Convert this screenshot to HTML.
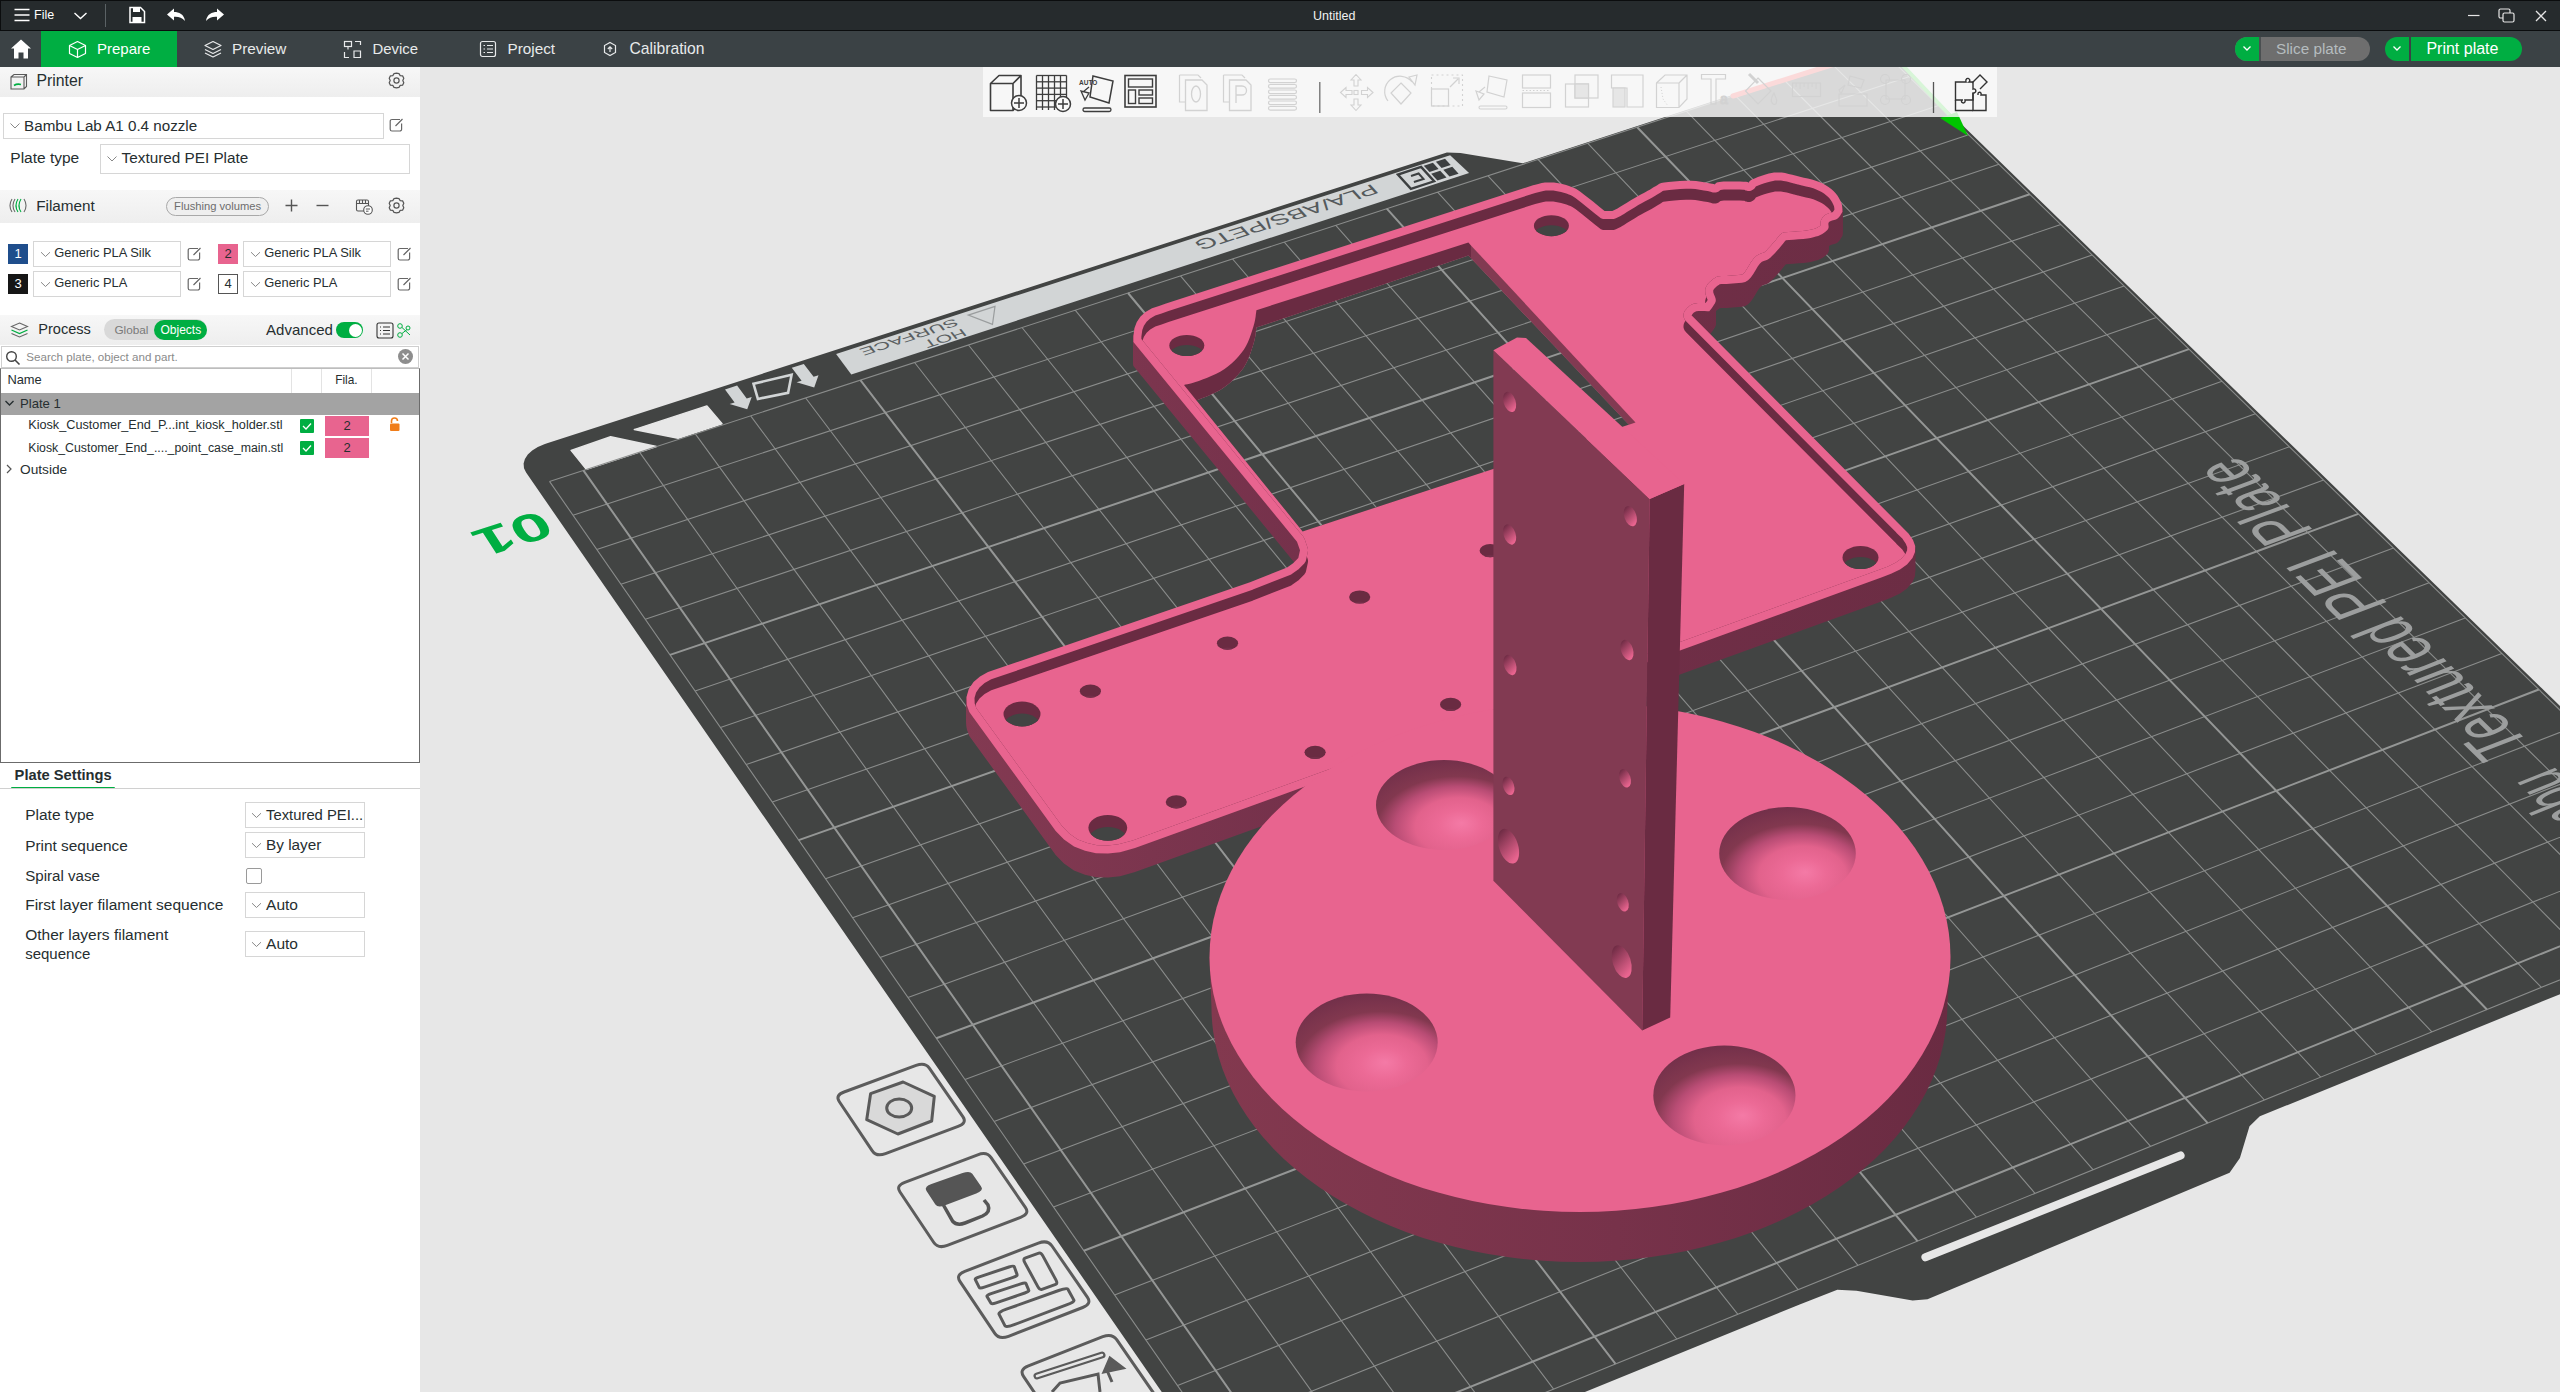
<!DOCTYPE html>
<html><head><meta charset="utf-8"><style>
*{box-sizing:border-box}
body{margin:0;width:2560px;height:1392px;position:relative;overflow:hidden;background:#e7e7e7;font-family:"Liberation Sans", sans-serif}
.a{position:absolute}
.t{position:absolute;white-space:nowrap;line-height:1}
</style></head><body>
<svg class="a" style="left:0;top:0" width="2560" height="1392" viewBox="0 0 2560 1392">
<defs><g id="grid"><path d="M549.5,481.4L1262.3,1507.6M639.5,452.1L1364.9,1465.8M695.3,433.9L1428.3,1440.1M750.7,415.9L1491.2,1414.5M805.7,398.0L1553.6,1389.1M914.6,362.5L1676.8,1339.0M968.5,345.0L1737.7,1314.2M1022.0,327.5L1798.1,1289.6M1075.2,310.2L1858.0,1265.3M1180.5,275.9L1976.4,1217.1M1232.6,259.0L2035.0,1193.3M1284.3,242.1L2093.0,1169.7M1335.8,225.4L2150.6,1146.3M1437.6,192.2L2264.4,1100.0M1488.0,175.8L2320.7,1077.1M1538.1,159.5L2376.5,1054.4M1587.8,143.3L2431.9,1031.9M1686.3,111.2L2541.4,987.4M1735.1,95.3L2595.5,965.3M1783.6,79.5L2649.3,943.5M1831.8,63.8L2702.6,921.8M1879.6,48.2L2755.5,900.3M1879.6,48.2L549.5,481.4M1908.9,76.7L573.0,515.2M1938.6,105.6L596.8,549.5M1968.6,134.8L620.9,584.2M1998.9,164.3L645.3,619.3M2060.8,224.4L695.1,691.0M2092.2,255.1L720.5,727.5M2124.1,286.0L746.2,764.6M2156.3,317.4L772.3,802.1M2222.0,381.3L825.5,878.7M2255.4,413.8L852.6,917.8M2289.3,446.8L880.1,957.4M2323.6,480.1L908.0,997.5M2393.5,548.1L965.0,1079.5M2429.1,582.8L994.1,1121.4M2465.2,617.9L1023.6,1163.9M2501.8,653.4L1053.5,1207.0M2576.3,726.0L1114.6,1295.0M2614.3,763.0L1145.9,1340.0M2652.9,800.4L1177.6,1385.6M2691.9,838.4L1209.8,1432.0M2755.5,900.3L1262.3,1507.6" stroke="#8a8c8b" stroke-width="1.1" fill="none"/><path d="M583.4,470.4L1300.9,1491.9M860.4,380.2L1615.5,1363.9M1128.0,293.0L1917.5,1241.1M1386.8,208.7L2207.7,1123.1M1637.2,127.2L2486.9,1009.5M2029.7,194.2L670.0,654.9M2188.9,349.1L798.7,840.1M2358.3,513.9L936.3,1038.2M2538.8,689.5L1083.8,1250.7M2731.5,876.9L1242.4,1479.0" stroke="#949695" stroke-width="2" fill="none"/></g>
<path id="OUT" d="M1133.4,342.0 L1133.4,336.0 L1134.5,328.0 L1136.8,322.0 L1140.5,316.5 L1145.5,312.0 L1152.0,308.3 L1159.0,305.9 L1166.0,303.5 L1533.0,185.3 L1535.2,184.7 L1538.2,183.9 L1541.7,183.1 L1545.0,182.6 L1548.0,182.4 L1551.0,182.4 L1554.0,182.6 L1557.0,183.0 L1560.0,183.5 L1563.1,184.2 L1566.1,185.0 L1569.0,186.0 L1571.5,186.9 L1573.7,187.7 L1576.3,189.1 L1580.0,191.5 L1585.8,195.9 L1593.0,201.6 L1599.9,207.2 L1604.6,211.1 L1612.3,211.1 L1617.5,208.5 L1619.8,207.1 L1623.1,205.0 L1626.9,202.7 L1630.8,200.3 L1634.3,198.2 L1637.7,196.2 L1641.3,194.3 L1644.8,192.4 L1647.7,190.8 L1649.8,189.7 L1650.6,189.2 L1651.7,188.5 L1653.1,187.6 L1654.5,186.8 L1656.0,186.0 L1657.2,185.3 L1658.2,184.5 L1659.4,183.8 L1661.2,183.1 L1664.1,182.5 L1668.4,182.0 L1673.9,181.5 L1679.9,181.1 L1685.9,180.8 L1691.2,180.8 L1696.1,181.1 L1700.9,181.8 L1705.3,182.5 L1709.1,183.3 L1712.0,183.8 L1713.7,184.1 L1714.4,184.3 L1714.6,184.4 L1714.5,184.5 L1714.5,184.6 L1714.9,184.2 L1715.3,183.7 L1715.9,183.2 L1716.8,182.6 L1718.0,182.2 L1719.6,181.9 L1721.4,181.7 L1723.6,181.6 L1726.0,181.5 L1728.7,181.5 L1732.0,181.5 L1735.9,181.5 L1739.8,181.6 L1743.4,181.7 L1746.0,181.8 L1747.5,182.0 L1748.2,182.3 L1748.5,182.6 L1748.5,182.8 L1748.6,183.0 L1748.8,182.6 L1749.1,182.0 L1749.5,181.2 L1750.4,180.4 L1752.0,179.5 L1754.6,178.4 L1757.9,177.1 L1761.7,175.7 L1765.5,174.5 L1768.8,173.6 L1771.6,173.0 L1774.0,172.6 L1776.4,172.4 L1778.9,172.4 L1781.8,172.6 L1785.1,173.1 L1788.6,173.9 L1792.3,174.8 L1796.1,175.8 L1799.9,176.8 L1803.8,177.7 L1807.8,178.6 L1811.9,179.6 L1815.7,180.7 L1819.3,182.0 L1822.6,183.5 L1825.7,185.2 L1828.5,187.0 L1831.2,189.0 L1833.5,191.0 L1835.6,193.2 L1837.4,195.6 L1838.9,198.1 L1840.2,200.5 L1841.2,202.7 L1841.9,204.8 L1842.2,206.9 L1842.4,208.9 L1842.4,210.5 L1842.5,211.7 L1841.9,212.7 L1841.1,214.1 L1840.1,215.8 L1838.9,217.3 L1837.6,218.6 L1836.0,219.5 L1834.1,220.1 L1832.1,220.6 L1830.3,221.2 L1829.0,222.1 L1828.4,223.3 L1828.4,224.7 L1828.6,226.1 L1828.6,227.6 L1828.1,229.0 L1827.1,230.3 L1825.7,231.6 L1824.1,232.8 L1822.3,234.0 L1820.3,235.0 L1818.2,235.9 L1815.9,236.6 L1813.4,237.3 L1810.6,237.9 L1807.4,238.4 L1803.3,238.9 L1798.4,239.3 L1793.4,239.7 L1789.0,240.0 L1785.9,240.2 L1784.7,241.6 L1783.0,243.7 L1781.1,246.0 L1779.1,248.4 L1777.2,250.5 L1775.5,252.4 L1773.8,254.3 L1772.0,256.1 L1770.3,257.7 L1768.6,259.1 L1766.9,260.0 L1765.3,260.5 L1763.7,261.0 L1761.9,261.8 L1760.0,263.4 L1757.9,266.2 L1755.7,269.9 L1753.3,273.9 L1750.8,277.6 L1748.1,280.3 L1745.2,281.9 L1742.0,282.7 L1738.8,283.1 L1735.6,283.2 L1732.6,283.5 L1729.6,283.8 L1726.6,284.0 L1723.8,284.1 L1721.4,284.1 L1719.7,284.2 L1718.7,285.0 L1717.1,286.1 L1715.5,287.4 L1714.0,289.0 L1713.2,290.6 L1713.3,292.4 L1714.0,294.5 L1715.0,296.7 L1715.7,298.9 L1715.8,301.0 L1715.0,303.2 L1713.5,305.6 L1711.9,307.9 L1710.3,309.9 L1709.3,311.3 L1707.4,311.2 L1704.7,311.1 L1701.6,311.0 L1698.7,311.0 L1696.4,311.3 L1694.8,311.9 L1693.6,312.8 L1692.7,313.8 L1692.0,314.7 L1691.5,315.3 L1902.0,527.0 L1908.5,533.5 L1913.0,540.0 L1915.2,546.0 L1915.0,552.0 L1912.5,558.0 L1907.0,564.5 L1900.0,569.5 L1891.0,573.8 L1882.0,577.2 L1135.0,848.1 L1120.0,852.2 L1108.0,853.6 L1096.0,853.2 L1085.0,850.8 L1074.0,846.5 L1064.0,839.5 L1055.7,831.0 L969.3,712.0 L966.8,705.0 L966.5,697.0 L968.8,689.0 L973.5,682.0 L980.0,676.5 L988.0,672.0 L999.0,668.2 L1250.0,582.2 L1287.1,567.6 L1293.1,563.3 L1298.3,558.1 L1300.0,550.3 L1297.0,541.7Z"/>
<linearGradient id="bwall" gradientUnits="userSpaceOnUse" x1="960" y1="0" x2="1920" y2="0"><stop offset="0" stop-color="#833a52"/><stop offset="0.4" stop-color="#73304a"/><stop offset="1" stop-color="#6c2d44"/></linearGradient>
<clipPath id="c1"><path d="M1141.4,339.1 L1303.2,536.6 L1303.6,537.2 L1304.0,537.8 L1304.3,538.4 L1304.6,539.1 L1307.6,547.7 L1307.8,548.4 L1307.9,549.1 L1308.0,549.8 L1308.0,550.5 L1307.9,551.3 L1307.8,552.0 L1306.1,559.8 L1305.9,560.5 L1305.7,561.3 L1305.3,561.9 L1304.9,562.6 L1304.5,563.2 L1304.0,563.8 L1298.8,569.0 L1298.3,569.4 L1297.8,569.8 L1291.8,574.1 L1291.2,574.5 L1290.6,574.8 L1290.0,575.0 L1252.9,589.6 L1252.6,589.8 L1001.6,675.8 L991.3,679.3 L984.6,683.1 L979.5,687.4 L976.1,692.4 L974.5,698.0 L974.7,703.5 L976.4,708.2 L1061.8,825.8 L1069.2,833.4 L1077.8,839.4 L1087.3,843.1 L1097.0,845.2 L1107.7,845.6 L1118.5,844.3 L1132.6,840.5 L1879.2,569.7 L1887.9,566.4 L1895.9,562.6 L1901.5,558.6 L1905.6,553.8 L1907.1,550.3 L1907.2,547.3 L1905.8,543.7 L1902.3,538.6 L1896.3,532.7 L1896.3,532.6 L1685.8,320.9 L1685.3,320.3 L1684.8,319.7 L1684.4,319.0 L1684.1,318.3 L1683.8,317.5 L1683.6,316.7 L1683.5,315.9 L1683.5,315.1 L1683.6,314.3 L1683.7,313.5 L1683.9,312.8 L1684.2,312.0 L1684.6,311.3 L1685.0,310.6 L1685.5,310.0 L1685.9,309.6 L1686.4,308.9 L1686.8,308.4 L1687.7,307.4 L1688.3,306.9 L1688.8,306.4 L1690.0,305.5 L1690.6,305.1 L1691.3,304.7 L1691.9,304.4 L1693.5,303.8 L1694.2,303.6 L1694.8,303.5 L1695.5,303.4 L1697.8,303.1 L1698.6,303.0 L1701.5,303.0 L1701.9,303.0 L1704.9,303.1 L1705.1,303.1 L1705.5,303.1 L1705.5,303.1 L1706.9,301.2 L1707.6,299.9 L1707.5,299.5 L1706.7,297.7 L1706.5,297.2 L1705.8,295.1 L1705.5,294.4 L1705.4,293.6 L1705.3,292.8 L1705.2,291.0 L1705.2,290.1 L1705.3,289.3 L1705.5,288.5 L1705.7,287.8 L1706.0,287.0 L1706.9,285.4 L1707.3,284.7 L1707.7,284.1 L1708.2,283.5 L1709.6,281.9 L1710.5,281.2 L1712.1,279.9 L1712.5,279.6 L1713.9,278.6 L1714.8,277.9 L1715.5,277.4 L1716.2,277.0 L1717.0,276.7 L1717.8,276.4 L1718.6,276.3 L1719.4,276.2 L1721.2,276.1 L1721.2,276.1 L1723.6,276.1 L1726.3,276.0 L1729.0,275.8 L1731.8,275.5 L1731.9,275.5 L1734.9,275.3 L1735.1,275.3 L1738.1,275.1 L1740.6,274.8 L1742.2,274.4 L1743.3,273.8 L1744.6,272.5 L1746.5,269.6 L1748.8,265.8 L1748.8,265.8 L1751.0,262.1 L1751.5,261.4 L1753.6,258.6 L1754.2,257.9 L1754.9,257.2 L1756.8,255.6 L1757.4,255.2 L1757.9,254.9 L1758.5,254.6 L1760.3,253.7 L1760.9,253.5 L1761.5,253.3 L1763.1,252.8 L1763.8,252.6 L1764.1,252.5 L1765.0,251.7 L1766.4,250.4 L1767.9,248.8 L1769.6,247.0 L1771.2,245.2 L1773.0,243.1 L1775.0,240.9 L1776.9,238.6 L1778.5,236.5 L1778.6,236.5 L1779.7,235.1 L1780.3,234.5 L1780.9,234.0 L1781.5,233.5 L1782.2,233.1 L1783.0,232.8 L1783.7,232.5 L1784.5,232.3 L1785.3,232.2 L1788.4,232.0 L1788.4,232.0 L1792.8,231.7 L1797.7,231.3 L1802.5,230.9 L1806.3,230.5 L1809.1,230.0 L1811.6,229.5 L1813.6,229.0 L1815.4,228.4 L1817.0,227.7 L1818.3,227.0 L1819.5,226.3 L1820.5,225.5 L1820.4,224.5 L1820.4,223.2 L1820.5,222.3 L1820.6,221.4 L1820.9,220.6 L1821.2,219.8 L1821.8,218.7 L1822.2,217.9 L1822.7,217.2 L1823.2,216.6 L1823.9,216.0 L1824.5,215.5 L1825.8,214.6 L1826.4,214.2 L1827.0,213.9 L1827.7,213.7 L1829.4,213.1 L1830.0,212.9 L1831.8,212.4 L1832.8,212.1 L1832.8,212.1 L1833.4,211.3 L1834.2,210.0 L1834.4,209.7 L1834.4,209.3 L1834.3,207.9 L1834.1,206.7 L1833.7,205.6 L1833.0,204.1 L1832.0,202.1 L1830.7,200.1 L1829.4,198.3 L1827.9,196.8 L1826.1,195.2 L1824.0,193.6 L1821.6,192.1 L1819.0,190.7 L1816.2,189.4 L1813.3,188.3 L1809.8,187.3 L1806.0,186.4 L1802.0,185.5 L1801.9,185.5 L1798.1,184.6 L1797.9,184.5 L1794.1,183.6 L1794.0,183.5 L1790.3,182.5 L1786.8,181.6 L1783.6,181.0 L1780.9,180.6 L1778.6,180.4 L1776.8,180.4 L1775.0,180.5 L1773.1,180.9 L1770.7,181.4 L1767.8,182.2 L1764.3,183.3 L1760.7,184.6 L1757.6,185.8 L1755.8,186.6 L1755.6,186.9 L1755.1,187.6 L1754.7,188.2 L1754.1,188.8 L1753.5,189.3 L1752.9,189.7 L1752.2,190.1 L1751.5,190.4 L1750.8,190.7 L1750.0,190.9 L1749.3,191.0 L1748.5,191.0 L1747.7,191.0 L1747.0,190.8 L1746.2,190.6 L1745.5,190.4 L1744.8,190.0 L1744.3,189.7 L1743.1,189.7 L1739.6,189.6 L1735.8,189.5 L1732.0,189.5 L1728.8,189.5 L1726.2,189.5 L1724.0,189.6 L1722.1,189.7 L1720.6,189.9 L1720.5,189.9 L1720.5,190.0 L1720.1,190.3 L1719.5,190.8 L1718.9,191.3 L1718.2,191.7 L1717.5,192.0 L1716.7,192.3 L1716.0,192.5 L1715.2,192.6 L1714.4,192.6 L1713.6,192.5 L1712.8,192.4 L1712.1,192.2 L1711.3,191.9 L1710.9,191.7 L1710.6,191.7 L1710.5,191.7 L1707.7,191.1 L1707.6,191.1 L1703.9,190.4 L1699.6,189.7 L1695.3,189.1 L1690.9,188.8 L1686.1,188.8 L1680.3,189.0 L1674.5,189.4 L1669.3,189.9 L1665.4,190.4 L1663.4,190.8 L1662.9,191.0 L1662.7,191.1 L1662.0,191.6 L1661.4,192.1 L1660.2,192.8 L1659.8,193.0 L1658.5,193.8 L1657.2,194.5 L1656.0,195.3 L1654.9,195.9 L1654.8,196.0 L1654.0,196.5 L1653.6,196.7 L1651.5,197.9 L1651.5,197.9 L1648.6,199.4 L1645.2,201.3 L1641.6,203.2 L1638.3,205.1 L1634.9,207.2 L1631.1,209.5 L1627.3,211.8 L1624.0,213.9 L1624.0,213.9 L1621.7,215.3 L1621.1,215.7 L1615.9,218.3 L1615.2,218.6 L1614.5,218.8 L1613.8,219.0 L1613.0,219.1 L1612.3,219.1 L1604.6,219.1 L1603.8,219.1 L1603.0,218.9 L1602.3,218.8 L1601.6,218.5 L1600.9,218.2 L1600.2,217.8 L1599.6,217.3 L1594.8,213.5 L1594.8,213.4 L1588.0,207.9 L1580.9,202.2 L1575.4,198.0 L1572.3,196.0 L1570.4,195.0 L1568.8,194.4 L1566.4,193.6 L1563.7,192.7 L1561.1,191.9 L1558.5,191.4 L1555.9,190.9 L1553.3,190.6 L1550.7,190.4 L1548.2,190.4 L1545.9,190.6 L1543.3,191.0 L1540.2,191.7 L1537.2,192.5 L1537.2,192.5 L1535.2,193.0 L1168.5,311.1 L1161.6,313.5 L1155.3,315.6 L1150.2,318.5 L1146.6,321.8 L1143.9,325.7 L1142.3,330.0 L1141.4,336.5Z"/></clipPath>
<clipPath id="c2"><path d="M1302.6,531.4 L1184.0,385.0 L1185.5,384.6 L1187.4,384.2 L1189.8,383.7 L1192.5,383.0 L1195.5,382.1 L1198.8,380.9 L1202.5,379.5 L1206.7,377.9 L1211.2,376.0 L1215.8,374.0 L1220.2,371.7 L1224.2,369.2 L1227.9,366.4 L1231.5,363.4 L1235.0,360.2 L1238.2,356.8 L1241.1,353.3 L1243.8,349.7 L1246.0,345.9 L1248.0,341.9 L1249.7,337.8 L1251.1,333.7 L1252.4,329.8 L1253.5,326.2 L1254.4,323.0 L1255.1,319.8 L1255.6,316.8 L1255.9,314.1 L1256.2,311.9 L1256.4,310.2 L1468.4,242.6 L1635.5,422.5Z"/></clipPath>
<clipPath id="c3"><path d="M1302.6,547.8 L1184.0,404.0 L1185.5,403.6 L1187.4,403.2 L1189.8,402.6 L1192.5,401.8 L1195.5,400.8 L1198.8,399.6 L1202.5,398.1 L1206.7,396.4 L1211.2,394.4 L1215.8,392.3 L1220.2,389.9 L1224.2,387.3 L1227.9,384.5 L1231.5,381.4 L1235.0,378.1 L1238.2,374.6 L1241.1,371.0 L1243.8,367.4 L1246.0,363.6 L1248.0,359.5 L1249.7,355.3 L1251.1,351.2 L1252.4,347.3 L1253.5,343.7 L1254.4,340.4 L1255.1,337.2 L1255.6,334.2 L1255.9,331.5 L1256.2,329.3 L1256.4,327.6 L1468.4,255.4 L1635.5,431.7Z"/></clipPath>
<clipPath id="c4"><path d="M1169.3,345.5a17.5,10.5 0 1,0 35.0,0a17.5,10.5 0 1,0 -35.0,0Z"/></clipPath>
<clipPath id="c5"><path d="M1533.9,225.7a17.5,10.5 0 1,0 35.0,0a17.5,10.5 0 1,0 -35.0,0Z"/></clipPath>
<clipPath id="c6"><path d="M1842.5,557.5a18,11.5 0 1,0 36,0a18,11.5 0 1,0 -36,0Z"/></clipPath>
<clipPath id="c7"><path d="M1088.3999999999999,827.8a19.4,12.9 0 1,0 38.8,0a19.4,12.9 0 1,0 -38.8,0Z"/></clipPath>
<clipPath id="c8"><path d="M1003.5,714a18.5,12.5 0 1,0 37.0,0a18.5,12.5 0 1,0 -37.0,0Z"/></clipPath>
<clipPath id="c9"><path d="M1079.8000000000002,691.2a10.6,6.6 0 1,0 21.2,0a10.6,6.6 0 1,0 -21.2,0Z"/></clipPath>
<clipPath id="c10"><path d="M1216.9,643.2a10.6,6.6 0 1,0 21.2,0a10.6,6.6 0 1,0 -21.2,0Z"/></clipPath>
<clipPath id="c11"><path d="M1349.1000000000001,597a10.6,6.6 0 1,0 21.2,0a10.6,6.6 0 1,0 -21.2,0Z"/></clipPath>
<clipPath id="c12"><path d="M1479.6000000000001,550.7a10.6,6.6 0 1,0 21.2,0a10.6,6.6 0 1,0 -21.2,0Z"/></clipPath>
<clipPath id="c13"><path d="M1440.0,704.4a10.6,6.6 0 1,0 21.2,0a10.6,6.6 0 1,0 -21.2,0Z"/></clipPath>
<clipPath id="c14"><path d="M1304.5,752.3a10.6,6.6 0 1,0 21.2,0a10.6,6.6 0 1,0 -21.2,0Z"/></clipPath>
<clipPath id="c15"><path d="M1165.7,801.9a10.6,6.6 0 1,0 21.2,0a10.6,6.6 0 1,0 -21.2,0Z"/></clipPath>
<linearGradient id="dwall" x1="0" x2="1" y1="0" y2="0"><stop offset="0" stop-color="#83394f"/><stop offset="0.55" stop-color="#77324a"/><stop offset="1" stop-color="#6a2b42"/></linearGradient>
<radialGradient id="dimp" cx="0.58" cy="0.8" r="0.8" fx="0.63" fy="0.7"><stop offset="0" stop-color="#f47aa6"/><stop offset="0.2" stop-color="#ec6a96"/><stop offset="0.4" stop-color="#e2628c"/><stop offset="0.58" stop-color="#b84c74"/><stop offset="0.74" stop-color="#82384f"/><stop offset="1" stop-color="#73304a"/></radialGradient>
<linearGradient id="vh" x1="0" y1="0" x2="0.3" y2="1"><stop offset="0" stop-color="#5e243a"/><stop offset="1" stop-color="#e8648f"/></linearGradient></defs>
<rect x="0" y="0" width="2560" height="1392" fill="#e7e7e7"/>
<path d="M1881.6,46.5 L1522.7,163.3 L1460.5,153.0 L1446.9,152.4 L547.1,443.3 L544.3,444.2 L537.8,446.9 L532.2,450.4 L527.8,454.4 L524.9,458.9 L523.6,463.6 L524.0,468.2 L526.1,472.6 L526.1,472.6 L1254.8,1526.6 L1800.3,1304.2 L1837.3,1289.7 L1856.5,1290.7 L1912.6,1300.6 L1927.5,1299.3 L2229.6,1172.8 L2239.9,1158.0 L2249.5,1126.3 L2259.8,1116.3 L2769.1,909.2Z" fill="#424443"/>
<path d="M571.1,450.4 L586.4,469.4 L656.4,446.6 L610.6,436.8Z" fill="#e7e7e7" stroke="#e7e7e7" stroke-width="1.5" stroke-linejoin="round"/>
<path d="M634.3,429.6 L706.9,405.9 L722.0,423.8 L678.2,438.2Z" fill="#e7e7e7" stroke="#e7e7e7" stroke-width="1.5" stroke-linejoin="round"/>
<line x1="1925.4" y1="1257.3" x2="2180.6" y2="1155.5" stroke="#e7e7e7" stroke-width="8" stroke-linecap="round"/>
<path d="M836.1,353.9 L851.3,374.6 L1469.1,173.0 L1450.1,155.2Z" fill="#d2d5d6"/>
<use href="#grid"/>
<g fill="url(#bwall)"><use href="#OUT" y="1"/><use href="#OUT" y="2"/><use href="#OUT" y="3"/><use href="#OUT" y="4"/><use href="#OUT" y="5"/><use href="#OUT" y="6"/><use href="#OUT" y="7"/><use href="#OUT" y="8"/><use href="#OUT" y="9"/><use href="#OUT" y="10"/><use href="#OUT" y="11"/><use href="#OUT" y="12"/><use href="#OUT" y="13"/><use href="#OUT" y="14"/><use href="#OUT" y="15"/><use href="#OUT" y="16"/><use href="#OUT" y="17"/><use href="#OUT" y="18"/><use href="#OUT" y="19"/><use href="#OUT" y="20"/><use href="#OUT" y="21"/><use href="#OUT" y="22"/><use href="#OUT" y="23"/><use href="#OUT" y="24"/></g>
<use href="#OUT" fill="#e8648f"/>
<path d="M1141.4,339.1 L1303.2,536.6 L1303.6,537.2 L1304.0,537.8 L1304.3,538.4 L1304.6,539.1 L1307.6,547.7 L1307.8,548.4 L1307.9,549.1 L1308.0,549.8 L1308.0,550.5 L1307.9,551.3 L1307.8,552.0 L1306.1,559.8 L1305.9,560.5 L1305.7,561.3 L1305.3,561.9 L1304.9,562.6 L1304.5,563.2 L1304.0,563.8 L1298.8,569.0 L1298.3,569.4 L1297.8,569.8 L1291.8,574.1 L1291.2,574.5 L1290.6,574.8 L1290.0,575.0 L1252.9,589.6 L1252.6,589.8 L1001.6,675.8 L991.3,679.3 L984.6,683.1 L979.5,687.4 L976.1,692.4 L974.5,698.0 L974.7,703.5 L976.4,708.2 L1061.8,825.8 L1069.2,833.4 L1077.8,839.4 L1087.3,843.1 L1097.0,845.2 L1107.7,845.6 L1118.5,844.3 L1132.6,840.5 L1879.2,569.7 L1887.9,566.4 L1895.9,562.6 L1901.5,558.6 L1905.6,553.8 L1907.1,550.3 L1907.2,547.3 L1905.8,543.7 L1902.3,538.6 L1896.3,532.7 L1896.3,532.6 L1685.8,320.9 L1685.3,320.3 L1684.8,319.7 L1684.4,319.0 L1684.1,318.3 L1683.8,317.5 L1683.6,316.7 L1683.5,315.9 L1683.5,315.1 L1683.6,314.3 L1683.7,313.5 L1683.9,312.8 L1684.2,312.0 L1684.6,311.3 L1685.0,310.6 L1685.5,310.0 L1685.9,309.6 L1686.4,308.9 L1686.8,308.4 L1687.7,307.4 L1688.3,306.9 L1688.8,306.4 L1690.0,305.5 L1690.6,305.1 L1691.3,304.7 L1691.9,304.4 L1693.5,303.8 L1694.2,303.6 L1694.8,303.5 L1695.5,303.4 L1697.8,303.1 L1698.6,303.0 L1701.5,303.0 L1701.9,303.0 L1704.9,303.1 L1705.1,303.1 L1705.5,303.1 L1705.5,303.1 L1706.9,301.2 L1707.6,299.9 L1707.5,299.5 L1706.7,297.7 L1706.5,297.2 L1705.8,295.1 L1705.5,294.4 L1705.4,293.6 L1705.3,292.8 L1705.2,291.0 L1705.2,290.1 L1705.3,289.3 L1705.5,288.5 L1705.7,287.8 L1706.0,287.0 L1706.9,285.4 L1707.3,284.7 L1707.7,284.1 L1708.2,283.5 L1709.6,281.9 L1710.5,281.2 L1712.1,279.9 L1712.5,279.6 L1713.9,278.6 L1714.8,277.9 L1715.5,277.4 L1716.2,277.0 L1717.0,276.7 L1717.8,276.4 L1718.6,276.3 L1719.4,276.2 L1721.2,276.1 L1721.2,276.1 L1723.6,276.1 L1726.3,276.0 L1729.0,275.8 L1731.8,275.5 L1731.9,275.5 L1734.9,275.3 L1735.1,275.3 L1738.1,275.1 L1740.6,274.8 L1742.2,274.4 L1743.3,273.8 L1744.6,272.5 L1746.5,269.6 L1748.8,265.8 L1748.8,265.8 L1751.0,262.1 L1751.5,261.4 L1753.6,258.6 L1754.2,257.9 L1754.9,257.2 L1756.8,255.6 L1757.4,255.2 L1757.9,254.9 L1758.5,254.6 L1760.3,253.7 L1760.9,253.5 L1761.5,253.3 L1763.1,252.8 L1763.8,252.6 L1764.1,252.5 L1765.0,251.7 L1766.4,250.4 L1767.9,248.8 L1769.6,247.0 L1771.2,245.2 L1773.0,243.1 L1775.0,240.9 L1776.9,238.6 L1778.5,236.5 L1778.6,236.5 L1779.7,235.1 L1780.3,234.5 L1780.9,234.0 L1781.5,233.5 L1782.2,233.1 L1783.0,232.8 L1783.7,232.5 L1784.5,232.3 L1785.3,232.2 L1788.4,232.0 L1788.4,232.0 L1792.8,231.7 L1797.7,231.3 L1802.5,230.9 L1806.3,230.5 L1809.1,230.0 L1811.6,229.5 L1813.6,229.0 L1815.4,228.4 L1817.0,227.7 L1818.3,227.0 L1819.5,226.3 L1820.5,225.5 L1820.4,224.5 L1820.4,223.2 L1820.5,222.3 L1820.6,221.4 L1820.9,220.6 L1821.2,219.8 L1821.8,218.7 L1822.2,217.9 L1822.7,217.2 L1823.2,216.6 L1823.9,216.0 L1824.5,215.5 L1825.8,214.6 L1826.4,214.2 L1827.0,213.9 L1827.7,213.7 L1829.4,213.1 L1830.0,212.9 L1831.8,212.4 L1832.8,212.1 L1832.8,212.1 L1833.4,211.3 L1834.2,210.0 L1834.4,209.7 L1834.4,209.3 L1834.3,207.9 L1834.1,206.7 L1833.7,205.6 L1833.0,204.1 L1832.0,202.1 L1830.7,200.1 L1829.4,198.3 L1827.9,196.8 L1826.1,195.2 L1824.0,193.6 L1821.6,192.1 L1819.0,190.7 L1816.2,189.4 L1813.3,188.3 L1809.8,187.3 L1806.0,186.4 L1802.0,185.5 L1801.9,185.5 L1798.1,184.6 L1797.9,184.5 L1794.1,183.6 L1794.0,183.5 L1790.3,182.5 L1786.8,181.6 L1783.6,181.0 L1780.9,180.6 L1778.6,180.4 L1776.8,180.4 L1775.0,180.5 L1773.1,180.9 L1770.7,181.4 L1767.8,182.2 L1764.3,183.3 L1760.7,184.6 L1757.6,185.8 L1755.8,186.6 L1755.6,186.9 L1755.1,187.6 L1754.7,188.2 L1754.1,188.8 L1753.5,189.3 L1752.9,189.7 L1752.2,190.1 L1751.5,190.4 L1750.8,190.7 L1750.0,190.9 L1749.3,191.0 L1748.5,191.0 L1747.7,191.0 L1747.0,190.8 L1746.2,190.6 L1745.5,190.4 L1744.8,190.0 L1744.3,189.7 L1743.1,189.7 L1739.6,189.6 L1735.8,189.5 L1732.0,189.5 L1728.8,189.5 L1726.2,189.5 L1724.0,189.6 L1722.1,189.7 L1720.6,189.9 L1720.5,189.9 L1720.5,190.0 L1720.1,190.3 L1719.5,190.8 L1718.9,191.3 L1718.2,191.7 L1717.5,192.0 L1716.7,192.3 L1716.0,192.5 L1715.2,192.6 L1714.4,192.6 L1713.6,192.5 L1712.8,192.4 L1712.1,192.2 L1711.3,191.9 L1710.9,191.7 L1710.6,191.7 L1710.5,191.7 L1707.7,191.1 L1707.6,191.1 L1703.9,190.4 L1699.6,189.7 L1695.3,189.1 L1690.9,188.8 L1686.1,188.8 L1680.3,189.0 L1674.5,189.4 L1669.3,189.9 L1665.4,190.4 L1663.4,190.8 L1662.9,191.0 L1662.7,191.1 L1662.0,191.6 L1661.4,192.1 L1660.2,192.8 L1659.8,193.0 L1658.5,193.8 L1657.2,194.5 L1656.0,195.3 L1654.9,195.9 L1654.8,196.0 L1654.0,196.5 L1653.6,196.7 L1651.5,197.9 L1651.5,197.9 L1648.6,199.4 L1645.2,201.3 L1641.6,203.2 L1638.3,205.1 L1634.9,207.2 L1631.1,209.5 L1627.3,211.8 L1624.0,213.9 L1624.0,213.9 L1621.7,215.3 L1621.1,215.7 L1615.9,218.3 L1615.2,218.6 L1614.5,218.8 L1613.8,219.0 L1613.0,219.1 L1612.3,219.1 L1604.6,219.1 L1603.8,219.1 L1603.0,218.9 L1602.3,218.8 L1601.6,218.5 L1600.9,218.2 L1600.2,217.8 L1599.6,217.3 L1594.8,213.5 L1594.8,213.4 L1588.0,207.9 L1580.9,202.2 L1575.4,198.0 L1572.3,196.0 L1570.4,195.0 L1568.8,194.4 L1566.4,193.6 L1563.7,192.7 L1561.1,191.9 L1558.5,191.4 L1555.9,190.9 L1553.3,190.6 L1550.7,190.4 L1548.2,190.4 L1545.9,190.6 L1543.3,191.0 L1540.2,191.7 L1537.2,192.5 L1537.2,192.5 L1535.2,193.0 L1168.5,311.1 L1161.6,313.5 L1155.3,315.6 L1150.2,318.5 L1146.6,321.8 L1143.9,325.7 L1142.3,330.0 L1141.4,336.5Z" fill="#6a2b42"/>
<g clip-path="url(#c1)"><path d="M1141.4,339.1 L1303.2,536.6 L1303.6,537.2 L1304.0,537.8 L1304.3,538.4 L1304.6,539.1 L1307.6,547.7 L1307.8,548.4 L1307.9,549.1 L1308.0,549.8 L1308.0,550.5 L1307.9,551.3 L1307.8,552.0 L1306.1,559.8 L1305.9,560.5 L1305.7,561.3 L1305.3,561.9 L1304.9,562.6 L1304.5,563.2 L1304.0,563.8 L1298.8,569.0 L1298.3,569.4 L1297.8,569.8 L1291.8,574.1 L1291.2,574.5 L1290.6,574.8 L1290.0,575.0 L1252.9,589.6 L1252.6,589.8 L1001.6,675.8 L991.3,679.3 L984.6,683.1 L979.5,687.4 L976.1,692.4 L974.5,698.0 L974.7,703.5 L976.4,708.2 L1061.8,825.8 L1069.2,833.4 L1077.8,839.4 L1087.3,843.1 L1097.0,845.2 L1107.7,845.6 L1118.5,844.3 L1132.6,840.5 L1879.2,569.7 L1887.9,566.4 L1895.9,562.6 L1901.5,558.6 L1905.6,553.8 L1907.1,550.3 L1907.2,547.3 L1905.8,543.7 L1902.3,538.6 L1896.3,532.7 L1896.3,532.6 L1685.8,320.9 L1685.3,320.3 L1684.8,319.7 L1684.4,319.0 L1684.1,318.3 L1683.8,317.5 L1683.6,316.7 L1683.5,315.9 L1683.5,315.1 L1683.6,314.3 L1683.7,313.5 L1683.9,312.8 L1684.2,312.0 L1684.6,311.3 L1685.0,310.6 L1685.5,310.0 L1685.9,309.6 L1686.4,308.9 L1686.8,308.4 L1687.7,307.4 L1688.3,306.9 L1688.8,306.4 L1690.0,305.5 L1690.6,305.1 L1691.3,304.7 L1691.9,304.4 L1693.5,303.8 L1694.2,303.6 L1694.8,303.5 L1695.5,303.4 L1697.8,303.1 L1698.6,303.0 L1701.5,303.0 L1701.9,303.0 L1704.9,303.1 L1705.1,303.1 L1705.5,303.1 L1705.5,303.1 L1706.9,301.2 L1707.6,299.9 L1707.5,299.5 L1706.7,297.7 L1706.5,297.2 L1705.8,295.1 L1705.5,294.4 L1705.4,293.6 L1705.3,292.8 L1705.2,291.0 L1705.2,290.1 L1705.3,289.3 L1705.5,288.5 L1705.7,287.8 L1706.0,287.0 L1706.9,285.4 L1707.3,284.7 L1707.7,284.1 L1708.2,283.5 L1709.6,281.9 L1710.5,281.2 L1712.1,279.9 L1712.5,279.6 L1713.9,278.6 L1714.8,277.9 L1715.5,277.4 L1716.2,277.0 L1717.0,276.7 L1717.8,276.4 L1718.6,276.3 L1719.4,276.2 L1721.2,276.1 L1721.2,276.1 L1723.6,276.1 L1726.3,276.0 L1729.0,275.8 L1731.8,275.5 L1731.9,275.5 L1734.9,275.3 L1735.1,275.3 L1738.1,275.1 L1740.6,274.8 L1742.2,274.4 L1743.3,273.8 L1744.6,272.5 L1746.5,269.6 L1748.8,265.8 L1748.8,265.8 L1751.0,262.1 L1751.5,261.4 L1753.6,258.6 L1754.2,257.9 L1754.9,257.2 L1756.8,255.6 L1757.4,255.2 L1757.9,254.9 L1758.5,254.6 L1760.3,253.7 L1760.9,253.5 L1761.5,253.3 L1763.1,252.8 L1763.8,252.6 L1764.1,252.5 L1765.0,251.7 L1766.4,250.4 L1767.9,248.8 L1769.6,247.0 L1771.2,245.2 L1773.0,243.1 L1775.0,240.9 L1776.9,238.6 L1778.5,236.5 L1778.6,236.5 L1779.7,235.1 L1780.3,234.5 L1780.9,234.0 L1781.5,233.5 L1782.2,233.1 L1783.0,232.8 L1783.7,232.5 L1784.5,232.3 L1785.3,232.2 L1788.4,232.0 L1788.4,232.0 L1792.8,231.7 L1797.7,231.3 L1802.5,230.9 L1806.3,230.5 L1809.1,230.0 L1811.6,229.5 L1813.6,229.0 L1815.4,228.4 L1817.0,227.7 L1818.3,227.0 L1819.5,226.3 L1820.5,225.5 L1820.4,224.5 L1820.4,223.2 L1820.5,222.3 L1820.6,221.4 L1820.9,220.6 L1821.2,219.8 L1821.8,218.7 L1822.2,217.9 L1822.7,217.2 L1823.2,216.6 L1823.9,216.0 L1824.5,215.5 L1825.8,214.6 L1826.4,214.2 L1827.0,213.9 L1827.7,213.7 L1829.4,213.1 L1830.0,212.9 L1831.8,212.4 L1832.8,212.1 L1832.8,212.1 L1833.4,211.3 L1834.2,210.0 L1834.4,209.7 L1834.4,209.3 L1834.3,207.9 L1834.1,206.7 L1833.7,205.6 L1833.0,204.1 L1832.0,202.1 L1830.7,200.1 L1829.4,198.3 L1827.9,196.8 L1826.1,195.2 L1824.0,193.6 L1821.6,192.1 L1819.0,190.7 L1816.2,189.4 L1813.3,188.3 L1809.8,187.3 L1806.0,186.4 L1802.0,185.5 L1801.9,185.5 L1798.1,184.6 L1797.9,184.5 L1794.1,183.6 L1794.0,183.5 L1790.3,182.5 L1786.8,181.6 L1783.6,181.0 L1780.9,180.6 L1778.6,180.4 L1776.8,180.4 L1775.0,180.5 L1773.1,180.9 L1770.7,181.4 L1767.8,182.2 L1764.3,183.3 L1760.7,184.6 L1757.6,185.8 L1755.8,186.6 L1755.6,186.9 L1755.1,187.6 L1754.7,188.2 L1754.1,188.8 L1753.5,189.3 L1752.9,189.7 L1752.2,190.1 L1751.5,190.4 L1750.8,190.7 L1750.0,190.9 L1749.3,191.0 L1748.5,191.0 L1747.7,191.0 L1747.0,190.8 L1746.2,190.6 L1745.5,190.4 L1744.8,190.0 L1744.3,189.7 L1743.1,189.7 L1739.6,189.6 L1735.8,189.5 L1732.0,189.5 L1728.8,189.5 L1726.2,189.5 L1724.0,189.6 L1722.1,189.7 L1720.6,189.9 L1720.5,189.9 L1720.5,190.0 L1720.1,190.3 L1719.5,190.8 L1718.9,191.3 L1718.2,191.7 L1717.5,192.0 L1716.7,192.3 L1716.0,192.5 L1715.2,192.6 L1714.4,192.6 L1713.6,192.5 L1712.8,192.4 L1712.1,192.2 L1711.3,191.9 L1710.9,191.7 L1710.6,191.7 L1710.5,191.7 L1707.7,191.1 L1707.6,191.1 L1703.9,190.4 L1699.6,189.7 L1695.3,189.1 L1690.9,188.8 L1686.1,188.8 L1680.3,189.0 L1674.5,189.4 L1669.3,189.9 L1665.4,190.4 L1663.4,190.8 L1662.9,191.0 L1662.7,191.1 L1662.0,191.6 L1661.4,192.1 L1660.2,192.8 L1659.8,193.0 L1658.5,193.8 L1657.2,194.5 L1656.0,195.3 L1654.9,195.9 L1654.8,196.0 L1654.0,196.5 L1653.6,196.7 L1651.5,197.9 L1651.5,197.9 L1648.6,199.4 L1645.2,201.3 L1641.6,203.2 L1638.3,205.1 L1634.9,207.2 L1631.1,209.5 L1627.3,211.8 L1624.0,213.9 L1624.0,213.9 L1621.7,215.3 L1621.1,215.7 L1615.9,218.3 L1615.2,218.6 L1614.5,218.8 L1613.8,219.0 L1613.0,219.1 L1612.3,219.1 L1604.6,219.1 L1603.8,219.1 L1603.0,218.9 L1602.3,218.8 L1601.6,218.5 L1600.9,218.2 L1600.2,217.8 L1599.6,217.3 L1594.8,213.5 L1594.8,213.4 L1588.0,207.9 L1580.9,202.2 L1575.4,198.0 L1572.3,196.0 L1570.4,195.0 L1568.8,194.4 L1566.4,193.6 L1563.7,192.7 L1561.1,191.9 L1558.5,191.4 L1555.9,190.9 L1553.3,190.6 L1550.7,190.4 L1548.2,190.4 L1545.9,190.6 L1543.3,191.0 L1540.2,191.7 L1537.2,192.5 L1537.2,192.5 L1535.2,193.0 L1168.5,311.1 L1161.6,313.5 L1155.3,315.6 L1150.2,318.5 L1146.6,321.8 L1143.9,325.7 L1142.3,330.0 L1141.4,336.5Z" fill="#e8648f" transform="translate(0,11)"/></g>
<path d="M1468.4,242.6 L1256.4,310.2 L1256.2,311.9 L1255.9,314.1 L1255.6,316.8 L1255.1,319.8 L1254.4,323.0 L1253.5,326.2 L1252.4,329.8 L1251.1,333.7 L1249.7,337.8 L1248.0,341.9 L1246.0,345.9 L1243.8,349.7 L1241.1,353.3 L1238.2,356.8 L1235.0,360.2 L1231.5,363.4 L1227.9,366.4 L1224.2,369.2 L1220.2,371.7 L1215.8,374.0 L1211.2,376.0 L1206.7,377.9 L1202.5,379.5 L1198.8,380.9 L1195.5,382.1 L1192.5,383.0 L1189.8,383.7 L1187.4,384.2 L1185.5,384.6 L1184.0,385.0 L1196.5,400.5 L1198.8,399.6 L1202.5,398.1 L1206.7,396.4 L1211.2,394.4 L1215.8,392.3 L1220.2,389.9 L1224.2,387.3 L1227.9,384.5 L1231.5,381.4 L1235.0,378.1 L1238.2,374.6 L1241.1,371.0 L1243.8,367.4 L1246.0,363.6 L1248.0,359.5 L1249.7,355.3 L1251.1,351.2 L1252.4,347.3 L1253.5,343.7 L1254.4,340.4 L1255.1,337.2 L1255.6,334.2 L1255.9,331.5 L1256.2,329.3 L1256.4,327.6 L1468.4,255.4 L1471.0,258.2 L1471.0,245.4Z" fill="#6a2b42"/>
<path d="M1471.0,245.4 L1471.0,258.2 L1628.8,424.7 L1635.5,422.5Z" fill="#823a52"/>
<g clip-path="url(#c2)"><g clip-path="url(#c3)"><rect x="900" y="150" width="900" height="500" fill="#424443"/><use href="#grid"/></g></g>
<ellipse cx="1186.8" cy="345.5" rx="17.5" ry="10.5" fill="#6a2b42"/>
<g clip-path="url(#c4)"><g transform="translate(0,10)"><ellipse cx="1186.8" cy="345.5" rx="17.5" ry="10.5" fill="#424443"/></g></g>
<ellipse cx="1551.4" cy="225.7" rx="17.5" ry="10.5" fill="#6a2b42"/>
<g clip-path="url(#c5)"><g transform="translate(0,10)"><ellipse cx="1551.4" cy="225.7" rx="17.5" ry="10.5" fill="#424443"/></g></g>
<ellipse cx="1860.5" cy="557.5" rx="18" ry="11.5" fill="#6a2b42"/>
<g clip-path="url(#c6)"><g transform="translate(0,11)"><ellipse cx="1860.5" cy="557.5" rx="18" ry="11.5" fill="#424443"/></g></g>
<ellipse cx="1107.8" cy="827.8" rx="19.4" ry="12.9" fill="#6a2b42"/>
<g clip-path="url(#c7)"><g transform="translate(0,12)"><ellipse cx="1107.8" cy="827.8" rx="19.4" ry="12.9" fill="#424443"/></g></g>
<ellipse cx="1022" cy="714" rx="18.5" ry="12.5" fill="#6a2b42"/>
<g clip-path="url(#c8)"><g transform="translate(0,12)"><ellipse cx="1022" cy="714" rx="18.5" ry="12.5" fill="#424443"/></g></g>
<ellipse cx="1090.4" cy="691.2" rx="10.6" ry="6.6" fill="#6a2b42"/>
<g clip-path="url(#c9)"><g transform="translate(0,11)"><ellipse cx="1090.4" cy="691.2" rx="10.6" ry="6.6" fill="#73304a"/></g></g>
<ellipse cx="1227.5" cy="643.2" rx="10.6" ry="6.6" fill="#6a2b42"/>
<g clip-path="url(#c10)"><g transform="translate(0,11)"><ellipse cx="1227.5" cy="643.2" rx="10.6" ry="6.6" fill="#73304a"/></g></g>
<ellipse cx="1359.7" cy="597" rx="10.6" ry="6.6" fill="#6a2b42"/>
<g clip-path="url(#c11)"><g transform="translate(0,11)"><ellipse cx="1359.7" cy="597" rx="10.6" ry="6.6" fill="#73304a"/></g></g>
<ellipse cx="1490.2" cy="550.7" rx="10.6" ry="6.6" fill="#6a2b42"/>
<g clip-path="url(#c12)"><g transform="translate(0,11)"><ellipse cx="1490.2" cy="550.7" rx="10.6" ry="6.6" fill="#73304a"/></g></g>
<ellipse cx="1450.6" cy="704.4" rx="10.6" ry="6.6" fill="#6a2b42"/>
<g clip-path="url(#c13)"><g transform="translate(0,11)"><ellipse cx="1450.6" cy="704.4" rx="10.6" ry="6.6" fill="#73304a"/></g></g>
<ellipse cx="1315.1" cy="752.3" rx="10.6" ry="6.6" fill="#6a2b42"/>
<g clip-path="url(#c14)"><g transform="translate(0,11)"><ellipse cx="1315.1" cy="752.3" rx="10.6" ry="6.6" fill="#73304a"/></g></g>
<ellipse cx="1176.3" cy="801.9" rx="10.6" ry="6.6" fill="#6a2b42"/>
<g clip-path="url(#c15)"><g transform="translate(0,11)"><ellipse cx="1176.3" cy="801.9" rx="10.6" ry="6.6" fill="#73304a"/></g></g>
<path d="M1209.5,957 L1211.4935,1007 A367.9065,255 0 0,0 1947.3065000000001,1007 L1950.5,957 Z" fill="url(#dwall)"/>
<ellipse cx="1580" cy="957" rx="370.5" ry="255" fill="#e8648f"/>
<ellipse cx="1444" cy="805" rx="68" ry="45" fill="url(#dimp)"/>
<ellipse cx="1787.5" cy="853.5" rx="68.3" ry="46.4" fill="url(#dimp)"/>
<ellipse cx="1366.7" cy="1042.6" rx="71" ry="49" fill="url(#dimp)"/>
<ellipse cx="1724.4" cy="1095.4" rx="71.1" ry="50" fill="url(#dimp)"/>
<path d="M1493.4,350.2 L1649.7,499 L1642.2,1030.6 L1493.4,880.7Z" fill="#823a52"/>
<path d="M1649.7,499 L1684.2,483.9 L1670.2,1017.6 L1642.2,1030.6Z" fill="#6a2b42"/>
<path d="M1493.4,350.2 L1517,337.5 L1526,338 L1684.2,483.9 L1649.7,499Z" fill="#e8648f"/>
<ellipse cx="1509.6" cy="401.9" rx="6" ry="10.5" fill="url(#vh)" transform="rotate(-18 1509.6 401.9)"/>
<ellipse cx="1509.6" cy="534.5" rx="6" ry="10.5" fill="url(#vh)" transform="rotate(-18 1509.6 534.5)"/>
<ellipse cx="1510" cy="665" rx="6" ry="10.5" fill="url(#vh)" transform="rotate(-18 1510 665)"/>
<ellipse cx="1508.5" cy="785.9" rx="5.5" ry="9.5" fill="url(#vh)" transform="rotate(-18 1508.5 785.9)"/>
<ellipse cx="1508.5" cy="846.2" rx="9.5" ry="18" fill="url(#vh)" transform="rotate(-18 1508.5 846.2)"/>
<ellipse cx="1630.3" cy="516.2" rx="6" ry="10.5" fill="url(#vh)" transform="rotate(-18 1630.3 516.2)"/>
<ellipse cx="1627" cy="650" rx="6" ry="10.5" fill="url(#vh)" transform="rotate(-18 1627 650)"/>
<ellipse cx="1625" cy="778.3" rx="5.5" ry="9.5" fill="url(#vh)" transform="rotate(-18 1625 778.3)"/>
<ellipse cx="1622.8" cy="902.3" rx="5.5" ry="9.5" fill="url(#vh)" transform="rotate(-18 1622.8 902.3)"/>
<ellipse cx="1621.7" cy="961.6" rx="9" ry="17" fill="url(#vh)" transform="rotate(-18 1621.7 961.6)"/>
<g transform="matrix(-5.0705,1.6415,-2.6933,-2.9947,1372.37,183.87)"><text x="0" y="0" font-family='"Liberation Sans", sans-serif' font-size="4.2" font-weight="normal" fill="#555a5c" textLength="35.5" lengthAdjust="spacingAndGlyphs" >PLA/ABS/PETG</text></g>
<g transform="matrix(-5.3558,1.7380,-2.5203,-3.1700,962.79,328.41)"><text x="0" y="0" font-family='"Liberation Sans", sans-serif' font-size="3.0" font-weight="normal" fill="#5a5f61" textLength="7.6" lengthAdjust="spacingAndGlyphs" >HOT</text></g>
<g transform="matrix(-5.3480,1.7311,-2.5104,-3.1576,954.74,318.28)"><text x="0" y="0" font-family='"Liberation Sans", sans-serif' font-size="3.0" font-weight="normal" fill="#5a5f61" textLength="18.0" lengthAdjust="spacingAndGlyphs" >SURFACE</text></g>
<path d="M1421.1,166.9 L1397.9,174.5 L1410.9,188.8 L1434.1,181.3Z" fill="none" stroke="#3c3f40" stroke-width="2.4"/>
<path d="M1411.0,176.0 L1418.6,173.5 L1423.5,178.9 L1413.9,182.0" fill="none" stroke="#3c3f40" stroke-width="2"/>
<path d="M1445.0,158.8 L1435.9,161.8 L1441.6,168.0 L1450.7,165.1Z" fill="#3c3f40"/>
<path d="M1432.9,162.7 L1423.8,165.7 L1429.5,171.9 L1438.6,169.0Z" fill="#3c3f40"/>
<path d="M1452.3,166.8 L1443.3,169.8 L1449.5,176.6 L1458.6,173.7Z" fill="#3c3f40"/>
<path d="M1440.2,170.8 L1431.2,173.7 L1437.4,180.6 L1446.5,177.6Z" fill="#3c3f40"/>
<path d="M995.0,306.4 L968.3,315.1 L992.5,324.3Z" fill="none" stroke="#9a9d9e" stroke-width="1.2"/>
<path d="M753.5,383.8 L791.6,374.7 L788.1,392.8 L757.9,398.9Z" fill="none" stroke="#d2d5d6" stroke-width="2.6"/>
<path d="M737.1,385.5 L725.0,389.4 L734.6,402.5 L729.6,404.1 L747.2,409.3 L751.7,396.9 L746.7,398.5Z" fill="#d2d5d6"/>
<path d="M803.8,363.9 L791.8,367.8 L801.6,380.7 L796.6,382.3 L814.2,387.5 L818.5,375.2 L813.6,376.8Z" fill="#d2d5d6"/>
<g transform="matrix(-3.7611,-3.7000,7.2961,-2.8414,2532.11,745.25)"><text x="0" y="0" font-family='"Liberation Sans", sans-serif' font-size="9.6" font-weight="normal" fill="#9c9e9e" textLength="35.5" lengthAdjust="spacingAndGlyphs" >Textured</text></g>
<g transform="matrix(-3.5746,-3.5165,7.1841,-2.7001,2389.48,604.93)"><text x="0" y="0" font-family='"Liberation Sans", sans-serif' font-size="9.6" font-weight="normal" fill="#9c9e9e" textLength="16.5" lengthAdjust="spacingAndGlyphs" >PEI</text></g>
<g transform="matrix(-3.4788,-3.4223,7.1240,-2.6275,2314.72,531.39)"><text x="0" y="0" font-family='"Liberation Sans", sans-serif' font-size="9.6" font-weight="normal" fill="#9c9e9e" textLength="22.4" lengthAdjust="spacingAndGlyphs" >Plate</text></g>
<g transform="matrix(-3.9102,-3.8467,7.3812,-2.9545,2643.70,855.03)"><text x="0" y="0" font-family='"Liberation Sans", sans-serif' font-size="9.6" font-weight="normal" fill="#9c9e9e" textLength="23.2" lengthAdjust="spacingAndGlyphs" >Bambu</text></g>
<g transform="matrix(-1.45,0.46,-0.76,-1.18,541,510)"><text x="0" y="0" font-family="Liberation Sans" font-size="30" font-weight="bold" fill="#00ae42" textLength="50" lengthAdjust="spacingAndGlyphs">01</text></g>
<path d="M929.3,1068.1Q925.1,1062.0 916.1,1065.4L844.1,1092.0Q835.1,1095.3 839.2,1101.5L872.3,1150.8Q876.4,1157.0 885.5,1153.6L958.1,1126.4Q967.2,1123.0 963.0,1116.9Z" fill="none" stroke="#5c5c5c" stroke-width="3"/>
<path d="M991.1,1157.6Q986.8,1151.4 977.7,1154.8L904.8,1182.3Q895.7,1185.7 900.0,1192.0L933.8,1242.5Q938.1,1248.9 947.3,1245.4L1020.6,1217.3Q1029.8,1213.8 1025.5,1207.6Z" fill="none" stroke="#5c5c5c" stroke-width="3"/>
<path d="M1052.0,1246.0Q1047.6,1239.6 1038.4,1243.1L964.8,1271.4Q955.6,1274.9 959.9,1281.4L994.8,1333.4Q999.2,1339.9 1008.5,1336.3L1082.7,1307.5Q1091.9,1303.8 1087.5,1297.4Z" fill="none" stroke="#5c5c5c" stroke-width="3"/>
<path d="M1116.7,1339.7Q1112.1,1333.1 1102.8,1336.7L1028.4,1365.9Q1019.0,1369.5 1023.5,1376.3L1059.5,1429.9Q1064.0,1436.6 1073.4,1432.9L1148.5,1403.1Q1157.8,1399.4 1153.3,1392.7Z" fill="none" stroke="#5c5c5c" stroke-width="3"/>
<path d="M866.7,1119.7 L870.6,1093.7 L903.1,1082 L934.3,1096.3 L931.7,1121 L897.9,1134Z" fill="#d9d9d9" stroke="#5a5a5a" stroke-width="3" stroke-linejoin="round"/>
<ellipse cx="899.2" cy="1108" rx="12.5" ry="9" fill="none" stroke="#5a5a5a" stroke-width="3"/>
<path d="M927.2,1190.2Q925.2,1187.3 931.8,1185.0L962.9,1174.0Q969.5,1171.7 971.5,1174.4L980.5,1187.3Q982.5,1190.0 975.9,1192.5L944.8,1204.4Q938.2,1206.9 936.2,1204.0Z" fill="#555" stroke="#555" stroke-width="2"/>
<path d="M943.4,1205 L952.6,1221.2 Q957,1226 965,1223 L982.5,1216 Q991,1212 988,1205 L984,1200" fill="none" stroke="#555" stroke-width="3.5"/>
<path d="M1024.8,1262.6Q1022.8,1258.9 1025.0,1258.1L1038.8,1253.2Q1041.0,1252.4 1043.0,1256.1L1055.9,1279.9Q1057.9,1283.6 1055.7,1284.4L1041.9,1289.3Q1039.7,1290.1 1037.7,1286.4Z" fill="none" stroke="#5a5a5a" stroke-width="3"/>
<path d="M975.3,1279.6Q974.7,1278.4 979.4,1276.8L1009.0,1267.0Q1013.7,1265.4 1014.2,1266.6L1017.1,1274.6Q1017.6,1275.8 1013.1,1277.4L984.4,1287.2Q979.9,1288.8 979.3,1287.6Z" fill="none" stroke="#5a5a5a" stroke-width="3"/>
<path d="M987.0,1296.4Q986.4,1295.3 991.1,1293.7L1020.7,1283.9Q1025.4,1282.3 1025.9,1283.4L1028.8,1290.3Q1029.3,1291.4 1024.8,1293.0L996.1,1302.8Q991.6,1304.4 991.0,1303.3Z" fill="none" stroke="#5a5a5a" stroke-width="3"/>
<path d="M999.0,1314.1Q998.1,1312.2 1006.4,1309.2L1058.7,1290.5Q1067.0,1287.5 1067.9,1289.2L1073.9,1300.1Q1074.8,1301.8 1066.5,1304.9L1014.2,1324.7Q1005.9,1327.8 1005.0,1325.9Z" fill="none" stroke="#5a5a5a" stroke-width="3"/>
<path d="M1037,1376 L1102,1355" stroke="#5a5a5a" stroke-width="7" stroke-linecap="round"/><path d="M1037,1376 L1102,1355" stroke="#e7e7e7" stroke-width="2.5" stroke-linecap="round"/>
<path d="M1104,1372 L1110,1358 L1123,1368 Z M1106,1368 L1112,1382" fill="#5a5a5a" stroke="#5a5a5a" stroke-width="3"/><path d="M1052,1392 L1060,1383 L1098,1374 L1100,1392" fill="none" stroke="#5a5a5a" stroke-width="3"/>
<path d="M1733,96 L1860,56" stroke="#ff4a4a" stroke-width="5" stroke-linecap="round"/>
<path d="M1893,55 L1958,124" stroke="#3cdc3c" stroke-width="4"/>
<path d="M1940,118 L1968,136 L1957,112 Z" fill="#00c400"/>
</svg>
<div class="a" style="left:983px;top:67px;width:1014px;height:50px;background:rgba(250,250,250,0.82)"></div><svg class="a" style="left:983px;top:67px" width="1014" height="50" viewBox="0 0 1014 50"><g transform="translate(0,6)"><g transform="translate(6,0)"><path d="M1.5,10.5L10,2.5H32V29L24,37.5H1.5Z M1.5,10.5H24V37.5 M24,10.5L32,2.5" stroke="#3d3d3d" stroke-width="1.6" fill="none" stroke-linejoin="round"/><circle cx="30" cy="30" r="7.5" fill="#fafafa" stroke="#3d3d3d" stroke-width="1.5"/><path d="M30,25V35M25,30H35" stroke="#3d3d3d" stroke-width="1.5"/></g><g transform="translate(52,0)"><path d="M1.5,2.5V37" stroke="#3d3d3d" stroke-width="1.3"/><path d="M7.5,2.5V37" stroke="#3d3d3d" stroke-width="1.3"/><path d="M13.5,2.5V37" stroke="#3d3d3d" stroke-width="1.3"/><path d="M19.5,2.5V37" stroke="#3d3d3d" stroke-width="1.3"/><path d="M25.5,2.5V37" stroke="#3d3d3d" stroke-width="1.3"/><path d="M31.5,2.5V37" stroke="#3d3d3d" stroke-width="1.3"/><path d="M1.5,2.5H31.5" stroke="#3d3d3d" stroke-width="1.3"/><path d="M1.5,8.8H31.5" stroke="#3d3d3d" stroke-width="1.3"/><path d="M1.5,15.1H31.5" stroke="#3d3d3d" stroke-width="1.3"/><path d="M1.5,21.4H31.5" stroke="#3d3d3d" stroke-width="1.3"/><path d="M1.5,27.7H31.5" stroke="#3d3d3d" stroke-width="1.3"/><path d="M1.5,34.0H31.5" stroke="#3d3d3d" stroke-width="1.3"/><circle cx="28" cy="31" r="7.5" fill="#fafafa" stroke="#3d3d3d" stroke-width="1.5"/><path d="M28,26V36M23,31H33" stroke="#3d3d3d" stroke-width="1.5"/></g><g transform="translate(96,0)"><text x="0" y="12" font-size="6.5" font-family="Liberation Sans" font-weight="bold" fill="#3d3d3d">AUTO</text><path d="M14,3L34,8L30,30L11,24Z" stroke="#3d3d3d" stroke-width="1.5" fill="none"/><path d="M10,14L4,19M2,18L6,27L10,20Z" stroke="#3d3d3d" stroke-width="1.3" fill="none"/><rect x="4" y="35" width="28" height="3.5" rx="1.7" fill="none" stroke="#3d3d3d" stroke-width="1.3"/></g><g transform="translate(141,0)"><rect x="1" y="2.5" width="31" height="31.5" stroke="#3d3d3d" stroke-width="1.6" fill="none"/><rect x="4.5" y="6" width="24" height="8" stroke="#3d3d3d" stroke-width="1.4" fill="none"/><rect x="4.5" y="17" width="7" height="13.5" stroke="#3d3d3d" stroke-width="1.4" fill="none"/><rect x="15" y="17" width="13.5" height="5" stroke="#3d3d3d" stroke-width="1.4" fill="none"/><rect x="15" y="25" width="13.5" height="5.5" stroke="#3d3d3d" stroke-width="1.4" fill="none"/></g><g transform="translate(195,0)"><path d="M1.5,2L20,2L23,5" stroke="#d2d2d2" stroke-width="1.2" fill="none"/><path d="M1.5,2V29H7" stroke="#d2d2d2" stroke-width="1.2" fill="none"/><path d="M7.5,7H24L29,12V37.5H7.5Z" stroke="#d2d2d2" stroke-width="1.3" fill="none"/><ellipse cx="18" cy="21" rx="4.5" ry="8" stroke="#d2d2d2" stroke-width="1.3" fill="none"/></g><g transform="translate(239,0)"><path d="M1.5,2L20,2L23,5" stroke="#d2d2d2" stroke-width="1.2" fill="none"/><path d="M1.5,2V29H7" stroke="#d2d2d2" stroke-width="1.2" fill="none"/><path d="M7.5,7H24L29,12V37.5H7.5Z" stroke="#d2d2d2" stroke-width="1.3" fill="none"/><path d="M14,30V13H20A4.5,4.5 0 0 1 20,22H14" stroke="#d2d2d2" stroke-width="1.3" fill="none"/></g><g transform="translate(284,0)"><rect x="1.5" y="6.0" width="28" height="3.6" rx="1.8" stroke="#d2d2d2" stroke-width="1.2" fill="none"/><rect x="1.5" y="11.5" width="28" height="3.6" rx="1.8" stroke="#d2d2d2" stroke-width="1.2" fill="none"/><rect x="1.5" y="17.0" width="28" height="3.6" rx="1.8" stroke="#d2d2d2" stroke-width="1.2" fill="none"/><rect x="1.5" y="22.5" width="28" height="3.6" rx="1.8" stroke="#d2d2d2" stroke-width="1.2" fill="none"/><rect x="1.5" y="28.0" width="28" height="3.6" rx="1.8" stroke="#d2d2d2" stroke-width="1.2" fill="none"/><rect x="1.5" y="33.5" width="28" height="3.6" rx="1.8" stroke="#d2d2d2" stroke-width="1.2" fill="none"/></g><path d="M336.8,9V40" stroke="#6e6e6e" stroke-width="1.3"/><g transform="translate(356,0)"><path d="M17,1.5L22,7H19V13H15V7H12Z M17,37.5L22,32H19V26H15V32H12Z M1.5,19.5L7,14.5V17.5H13V21.5H7V24.5Z M34,19.5L28.5,14.5V17.5H22.5V21.5H28.5V24.5Z" stroke="#d2d2d2" stroke-width="1.1" fill="none"/><rect x="15" y="17.5" width="4" height="4" stroke="#d2d2d2" stroke-width="1.1" fill="none"/></g><g transform="translate(402,0)"><path d="M3,28A14,14 0 0 1 27,9" stroke="#d2d2d2" stroke-width="1.2" fill="none"/><path d="M16,10L26,20L16,31L6,20Z" stroke="#d2d2d2" stroke-width="1.2" fill="none"/><path d="M24,4L32,2L30,12Z" stroke="#d2d2d2" stroke-width="1.2" fill="none"/></g><g transform="translate(447,0)"><rect x="1.5" y="2" width="31" height="31" stroke="#d2d2d2" stroke-width="1.1" fill="none" stroke-dasharray="2,3"/><rect x="1.5" y="16" width="17" height="17" stroke="#d2d2d2" stroke-width="1.2" fill="none"/><path d="M20,14L28,6M23,5H29V11" stroke="#d2d2d2" stroke-width="1.2" fill="none"/></g><g transform="translate(492,0)"><path d="M14,3L32,7L29,24L12,19Z" stroke="#d2d2d2" stroke-width="1.2" fill="none"/><path d="M10,14L4,19M1,18L4,27L9,21Z" stroke="#d2d2d2" stroke-width="1.2" fill="none"/><rect x="4" y="33" width="28" height="3" rx="1.5" stroke="#d2d2d2" stroke-width="1.1" fill="none"/></g><g transform="translate(538,0)"><rect x="1.5" y="2" width="28" height="13" stroke="#d2d2d2" stroke-width="1.2" fill="none"/><rect x="1.5" y="20" width="28" height="14.5" stroke="#d2d2d2" stroke-width="1.2" fill="none"/><path d="M1.5,17.5H29.5" stroke="#d2d2d2" stroke-width="1" stroke-dasharray="1.5,2"/></g><g transform="translate(581,0)"><rect x="1.5" y="11" width="23" height="23" stroke="#d2d2d2" stroke-width="1.2" fill="none"/><rect x="11" y="2" width="23" height="23" stroke="#d2d2d2" stroke-width="1.2" fill="none"/><rect x="11" y="11" width="13.5" height="14" fill="#e6e6e6" stroke="#d2d2d2" stroke-width="1.2"/></g><g transform="translate(627,0)"><path d="M1.5,2H33V34H17V15H1.5Z" stroke="#d2d2d2" stroke-width="1.2" fill="none"/><rect x="3" y="15" width="12" height="19" fill="#e6e6e6" stroke="#d2d2d2" stroke-width="1.1"/></g><g transform="translate(672,0)"><path d="M1.5,10L10,2H32V26L24,34.5H1.5Z M1.5,10H24V34.5 M24,10L32,2" stroke="#d2d2d2" stroke-width="1.2" fill="none"/><path d="M6,14L8,26L13,33" stroke="#d2d2d2" stroke-width="1" stroke-dasharray="1,2" fill="none"/></g><g transform="translate(717,0)"><path d="M1.5,1.5H25.5V6H16V31H11V6H1.5Z" stroke="#d2d2d2" stroke-width="1.2" fill="none"/><text x="20" y="31" font-size="14" font-family="Liberation Sans" fill="none" stroke="#d2d2d2" stroke-width="1">a</text></g><g transform="translate(761,0)"><path d="M14,5L27,18L14,31L1.5,18Z" stroke="#d2d2d2" stroke-width="1.2" fill="none"/><path d="M5,1L14,10" stroke="#d2d2d2" stroke-width="3"/><path d="M30,20C27,25 26,28 28.5,30.5C31,33 34,30 32,25Z" stroke="#d2d2d2" stroke-width="1.2" fill="none"/></g><g transform="translate(808,0)"><rect x="1.5" y="10" width="28" height="13.5" stroke="#d2d2d2" stroke-width="1.2" fill="none"/><path d="M5,10V14M9,10V16M13,10V14M17,10V16M21,10V14M25,10V16" stroke="#d2d2d2" stroke-width="1"/></g><g transform="translate(853,0)"><path d="M14,3L28,7L25,15L12,12Z" stroke="#d2d2d2" stroke-width="1.2" fill="none"/><path d="M9,12L3,17L5,21Z" stroke="#d2d2d2" stroke-width="1.1" fill="none"/><rect x="3" y="21" width="28" height="12" stroke="#d2d2d2" stroke-width="1.2" fill="none"/></g><g transform="translate(897,0)"><rect x="6" y="7" width="19" height="19" stroke="#d2d2d2" stroke-width="1.2" fill="none"/><circle cx="5" cy="6" r="4.5" stroke="#d2d2d2" stroke-width="1.1" fill="none"/><circle cx="26" cy="6" r="4.5" stroke="#d2d2d2" stroke-width="1.1" fill="none"/><circle cx="5" cy="27" r="4.5" stroke="#d2d2d2" stroke-width="1.1" fill="none"/><circle cx="26" cy="27" r="4.5" stroke="#d2d2d2" stroke-width="1.1" fill="none"/></g><path d="M950.5,9V40" stroke="#555" stroke-width="1.3"/><g transform="translate(971,0)"><path d="M1.5,9H12C11,6 14,4 15.5,6.5C16.5,8 15,9 15,9H19V16C22,15 23,19 20,20H19V27H11C12,30 8,31 7.5,28.5C7,27 9,27 9,27H1.5Z" stroke="#333" stroke-width="1.4" fill="none"/><path d="M19,20V37.5H32V22H27C28,19 24,18 24,21V22" stroke="#333" stroke-width="1.4" fill="none"/><path d="M18,10L26,2L33,9L26,16" stroke="#333" stroke-width="1.4" fill="none"/><path d="M1.5,27V37.5H19" stroke="#333" stroke-width="1.4" fill="none"/></g></g></svg>
<div class="a" style="left:0px;top:0px;width:2560px;height:31px;background:#262b2d;border-top:1px solid #0b0d0e;border-left:1px solid #0b0d0e"></div>
<div class="a" style="left:0px;top:30px;width:2560px;height:1px;background:#0b0d0e"></div>
<svg class="a" style="left:13px;top:7px;" width="18" height="16" viewBox="0 0 18 16"><path d="M1.5,2.5H16.5M1.5,8H16.5M1.5,13.5H16.5" stroke="#fff" stroke-width="1.6"/></svg>
<div class="t" style="left:34px;top:9.48px;font-size:12.5px;color:#ffffff;font-weight:normal;">File</div>
<svg class="a" style="left:73px;top:11px;" width="15" height="9" viewBox="0 0 15 9"><path d="M1.5,2L7.5,7.5L13.5,2" stroke="#fff" stroke-width="1.4" fill="none"/></svg>
<div class="a" style="left:105px;top:4px;width:1px;height:23px;background:#5b6265"></div>
<svg class="a" style="left:128px;top:6px;" width="18" height="18" viewBox="0 0 18 18"><path d="M2,1.5H12.5L16.5,5.5V16.5H2Z" stroke="#fff" stroke-width="1.5" fill="none"/><rect x="5" y="2" width="7" height="4" fill="#fff"/><rect x="4.5" y="11" width="9" height="5" fill="#fff"/></svg>
<svg class="a" style="left:166px;top:7px;" width="20" height="16" viewBox="0 0 20 16"><path d="M1,7.5L8,1.5V5C13,5 18,7 19,14C16,10.5 12.5,9.5 8,9.8V13.5Z" fill="#fff"/></svg>
<svg class="a" style="left:205px;top:7px;" width="20" height="16" viewBox="0 0 20 16"><path d="M19,7.5L12,1.5V5C7,5 2,7 1,14C4,10.5 7.5,9.5 12,9.8V13.5Z" fill="#fff"/></svg>
<div class="t" style="left:1313px;top:10.28px;font-size:12.5px;color:#f2f2f2;font-weight:normal;">Untitled</div>
<svg class="a" style="left:2466px;top:9px;" width="16" height="12" viewBox="0 0 16 12"><path d="M2,6.5H13.5" stroke="#e6e6e6" stroke-width="1.2"/></svg>
<svg class="a" style="left:2497px;top:7px;" width="20" height="17" viewBox="0 0 20 17"><rect x="2" y="2" width="11" height="9" rx="1.5" stroke="#e6e6e6" stroke-width="1.2" fill="none"/><rect x="6" y="6" width="11" height="9" rx="1.5" stroke="#e6e6e6" stroke-width="1.2" fill="#262b2d"/></svg>
<svg class="a" style="left:2533px;top:8px;" width="16" height="16" viewBox="0 0 16 16"><path d="M3,3L13,13M13,3L3,13" stroke="#e6e6e6" stroke-width="1.3"/></svg>
<div class="a" style="left:0px;top:31px;width:2560px;height:36px;background:#3b4245"></div>
<div class="a" style="left:41px;top:31px;width:136px;height:36px;background:#00ae42"></div>
<svg class="a" style="left:10px;top:38px;" width="22" height="22" viewBox="0 0 22 22"><path d="M11,1.5L21,10.5H18V20.5H13.5V14.5H8.5V20.5H4V10.5H1Z" fill="#fff"/></svg>
<svg class="a" style="left:68px;top:40px;" width="19" height="19" viewBox="0 0 19 19"><path d="M9.5,1.5L17.5,5.5V13.5L9.5,17.5L1.5,13.5V5.5Z M1.5,5.5L9.5,9.5L17.5,5.5 M9.5,9.5V17.5" stroke="#fff" stroke-width="1.2" fill="none" stroke-linejoin="round"/></svg>
<div class="t" style="left:97px;top:41.47px;font-size:15px;color:#ffffff;font-weight:normal;">Prepare</div>
<svg class="a" style="left:203px;top:40px;" width="20" height="19" viewBox="0 0 20 19"><path d="M10,1.5L18,5.5L10,9.5L2,5.5Z M2,9.5L10,13.5L18,9.5 M2,13L10,17L18,13" stroke="#e8eaeb" stroke-width="1.2" fill="none" stroke-linejoin="round"/></svg>
<div class="t" style="left:232px;top:41.33px;font-size:15.3px;color:#e8eaeb;font-weight:normal;">Preview</div>
<svg class="a" style="left:343px;top:40px;" width="20" height="19" viewBox="0 0 20 19"><rect x="1.5" y="1.5" width="7" height="5" stroke="#e8eaeb" stroke-width="1.2" fill="none"/><path d="M5,6.5V9.5M12,1.5H17.5V5 M1.5,12V17.5H6 M17.5,11V17.5H11V11Z" stroke="#e8eaeb" stroke-width="1.2" fill="none"/></svg>
<div class="t" style="left:372.5px;top:41.52px;font-size:14.9px;color:#e8eaeb;font-weight:normal;">Device</div>
<svg class="a" style="left:479px;top:40px;" width="18" height="18" viewBox="0 0 18 18"><rect x="1.5" y="1.5" width="15" height="15" rx="2" stroke="#e8eaeb" stroke-width="1.2" fill="none"/><path d="M4.5,5.5H6M8,5.5H14M4.5,9H6M8,9H14M4.5,12.5H6M8,12.5H14" stroke="#e8eaeb" stroke-width="1.2"/></svg>
<div class="t" style="left:507.5px;top:41.33px;font-size:15.3px;color:#e8eaeb;font-weight:normal;">Project</div>
<svg class="a" style="left:602px;top:41px;" width="16" height="16" viewBox="0 0 16 16"><path d="M8,1.5L13.5,4.5V11.5L8,14.5L2.5,11.5V4.5Z" stroke="#e8eaeb" stroke-width="1.2" fill="none"/><path d="M8,11V6M5.8,8L8,5.8L10.2,8" stroke="#e8eaeb" stroke-width="1.2" fill="none"/></svg>
<div class="t" style="left:629.5px;top:41.13px;font-size:15.7px;color:#e8eaeb;font-weight:normal;">Calibration</div>
<div class="a" style="left:2235px;top:37px;width:135px;height:24px;background:#6e6e6e;border-radius:12px"></div>
<div class="a" style="left:2235px;top:37px;width:24px;height:24px;background:#00ae42;border-radius:12px 0 0 12px"></div>
<div class="a" style="left:2259px;top:37px;width:2px;height:24px;background:#4a4f51"></div>
<svg class="a" style="left:2242px;top:45px;" width="10" height="7" viewBox="0 0 10 7"><path d="M1.5,1.5L5,5L8.5,1.5" stroke="#fff" stroke-width="1.3" fill="none"/></svg>
<div class="t" style="left:2276px;top:41.13px;font-size:15.3px;color:#b5bcbf;font-weight:normal;">Slice plate</div>
<div class="a" style="left:2385px;top:37px;width:137px;height:24px;background:#00ae42;border-radius:12px"></div>
<div class="a" style="left:2409px;top:37px;width:2px;height:24px;background:#3b4245"></div>
<svg class="a" style="left:2392px;top:45px;" width="10" height="7" viewBox="0 0 10 7"><path d="M1.5,1.5L5,5L8.5,1.5" stroke="#fff" stroke-width="1.3" fill="none"/></svg>
<div class="t" style="left:2426.4px;top:40.79px;font-size:16px;color:#ffffff;font-weight:normal;">Print plate</div>
<div class="a" style="left:0px;top:67px;width:420px;height:1325px;background:#ffffff"></div>
<div class="a" style="left:0px;top:67px;width:420px;height:30px;background:linear-gradient(#f7f7f7,#eeeeee)"></div>
<svg class="a" style="left:9px;top:73px;" width="19" height="17" viewBox="0 0 19 17"><path d="M2,4L5,1.5H17.5V13.5L15,16H2Z M2,4H15V16 M15,4L17.5,1.5" stroke="#5a5a5a" stroke-width="1.1" fill="none"/><path d="M5,12.5Q8,10.5 12,11.5" stroke="#00ae42" stroke-width="1.6" fill="none"/></svg>
<div class="t" style="left:36.5px;top:72.78px;font-size:15.8px;color:#262e30;font-weight:normal;">Printer</div>
<svg class="a" style="left:388px;top:72px;" width="17" height="17" viewBox="0 0 17 17"><path d="M8.5,1.2L11,1.6L12.2,3.6L14.6,3.9L15.8,6.2L14.8,8.5L15.8,10.8L14.6,13.1L12.2,13.4L11,15.4L8.5,15.8L6,15.4L4.8,13.4L2.4,13.1L1.2,10.8L2.2,8.5L1.2,6.2L2.4,3.9L4.8,3.6L6,1.6Z" stroke="#555" stroke-width="1.2" fill="none" stroke-linejoin="round"/><circle cx="8.5" cy="8.5" r="2.6" stroke="#555" stroke-width="1.2" fill="none"/></svg>
<div class="a" style="left:3px;top:113px;width:381px;height:26px;border:1px solid #d6d6d6;background:#fff"></div>
<svg class="a" style="left:9px;top:122px;" width="12" height="8" viewBox="0 0 12 8"><path d="M1.5,1.5L6,6L10.5,1.5" stroke="#888" stroke-width="1" fill="none"/></svg>
<div class="t" style="left:24.1px;top:117.67px;font-size:15.2px;color:#262e30;font-weight:normal;">Bambu Lab A1 0.4 nozzle</div>
<svg class="a" style="left:388px;top:117px;" width="16" height="16" viewBox="0 0 16 16"><path d="M12,2.5H4A1.8,1.8 0 0 0 2.2,4.3V12.2A1.8,1.8 0 0 0 4,14H11.8A1.8,1.8 0 0 0 13.6,12.2V6.5 M7.5,9L14.5,2" stroke="#666" stroke-width="1.2" fill="none"/></svg>
<div class="t" style="left:10.3px;top:150.33px;font-size:15.5px;color:#262e30;font-weight:normal;">Plate type</div>
<div class="a" style="left:100px;top:144px;width:310px;height:30px;border:1px solid #d6d6d6;background:#fff"></div>
<svg class="a" style="left:106px;top:155px;" width="12" height="8" viewBox="0 0 12 8"><path d="M1.5,1.5L6,6L10.5,1.5" stroke="#888" stroke-width="1" fill="none"/></svg>
<div class="t" style="left:121.6px;top:150.43px;font-size:15.3px;color:#262e30;font-weight:normal;">Textured PEI Plate</div>
<div class="a" style="left:0px;top:190px;width:420px;height:33px;background:linear-gradient(#f7f7f7,#eeeeee)"></div>
<svg class="a" style="left:9px;top:197px;" width="18" height="17" viewBox="0 0 18 17"><path d="M3,2C0.5,6 0.5,11 3,15 M6,2C3.5,6 3.5,11 6,15 M15,2C17.5,6 17.5,11 15,15" stroke="#6a6a6a" stroke-width="1.1" fill="none"/><path d="M9,2C6.5,6 6.5,11 9,15 M12,2C9.5,6 9.5,11 12,15" stroke="#00ae42" stroke-width="1.1" fill="none"/></svg>
<div class="t" style="left:36.2px;top:197.93px;font-size:15.3px;color:#262e30;font-weight:normal;">Filament</div>
<div class="a" style="left:166px;top:197px;width:103px;height:19px;border:1px solid #a9a9a9;border-radius:10px;background:#efefef"></div>
<div class="t" style="left:174.1px;top:201.10px;font-size:11.2px;color:#6d6d6d;font-weight:normal;">Flushing volumes</div>
<svg class="a" style="left:284px;top:198px;" width="15" height="15" viewBox="0 0 15 15"><path d="M7.5,1.5V13.5M1.5,7.5H13.5" stroke="#555" stroke-width="1.4"/></svg>
<svg class="a" style="left:315px;top:198px;" width="15" height="15" viewBox="0 0 15 15"><path d="M1.5,7.5H13.5" stroke="#555" stroke-width="1.4"/></svg>
<svg class="a" style="left:355px;top:197px;" width="19" height="18" viewBox="0 0 19 18"><rect x="1.5" y="3" width="12" height="11" rx="1.5" stroke="#555" stroke-width="1.1" fill="none"/><path d="M1.5,6.5H13.5M4.5,3V6.5M7.5,3V6.5M10.5,3V6.5" stroke="#555" stroke-width="1.1"/><circle cx="13" cy="13" r="4.3" fill="#fff" stroke="#555" stroke-width="1.1"/><path d="M10.8,12H15M13.5,14.2H11" stroke="#555" stroke-width="1"/></svg>
<svg class="a" style="left:388px;top:197px;" width="17" height="17" viewBox="0 0 17 17"><path d="M8.5,1.2L11,1.6L12.2,3.6L14.6,3.9L15.8,6.2L14.8,8.5L15.8,10.8L14.6,13.1L12.2,13.4L11,15.4L8.5,15.8L6,15.4L4.8,13.4L2.4,13.1L1.2,10.8L2.2,8.5L1.2,6.2L2.4,3.9L4.8,3.6L6,1.6Z" stroke="#555" stroke-width="1.2" fill="none" stroke-linejoin="round"/><circle cx="8.5" cy="8.5" r="2.6" stroke="#555" stroke-width="1.2" fill="none"/></svg>
<div class="a" style="left:8px;top:244px;width:20px;height:20px;background:#1f4e8c;"></div>
<div class="t" style="left:8px;top:244px;width:20px;height:20px;line-height:20px;text-align:center;font-size:13px;color:#fff">1</div>
<div class="a" style="left:33px;top:241px;width:148px;height:26px;border:1px solid #d6d6d6;background:#fff"></div>
<svg class="a" style="left:40px;top:251px;" width="11" height="7" viewBox="0 0 11 7"><path d="M1,1.2L5.5,5.5L10,1.2" stroke="#888" stroke-width="1" fill="none"/></svg>
<div class="t" style="left:54.3px;top:247.18px;font-size:12.9px;color:#262e30;font-weight:normal;">Generic PLA Silk</div>
<svg class="a" style="left:186px;top:246px;" width="16" height="16" viewBox="0 0 16 16"><path d="M12,2.5H4A1.8,1.8 0 0 0 2.2,4.3V12.2A1.8,1.8 0 0 0 4,14H11.8A1.8,1.8 0 0 0 13.6,12.2V6.5 M7.5,9L14.5,2" stroke="#666" stroke-width="1.2" fill="none"/></svg>
<div class="a" style="left:218px;top:244px;width:20px;height:20px;background:#e8648f;"></div>
<div class="t" style="left:218px;top:244px;width:20px;height:20px;line-height:20px;text-align:center;font-size:13px;color:#262e30">2</div>
<div class="a" style="left:243px;top:241px;width:148px;height:26px;border:1px solid #d6d6d6;background:#fff"></div>
<svg class="a" style="left:250px;top:251px;" width="11" height="7" viewBox="0 0 11 7"><path d="M1,1.2L5.5,5.5L10,1.2" stroke="#888" stroke-width="1" fill="none"/></svg>
<div class="t" style="left:264.3px;top:247.18px;font-size:12.9px;color:#262e30;font-weight:normal;">Generic PLA Silk</div>
<svg class="a" style="left:396px;top:246px;" width="16" height="16" viewBox="0 0 16 16"><path d="M12,2.5H4A1.8,1.8 0 0 0 2.2,4.3V12.2A1.8,1.8 0 0 0 4,14H11.8A1.8,1.8 0 0 0 13.6,12.2V6.5 M7.5,9L14.5,2" stroke="#666" stroke-width="1.2" fill="none"/></svg>
<div class="a" style="left:8px;top:274px;width:20px;height:20px;background:#161616;"></div>
<div class="t" style="left:8px;top:274px;width:20px;height:20px;line-height:20px;text-align:center;font-size:13px;color:#fff">3</div>
<div class="a" style="left:33px;top:271px;width:148px;height:26px;border:1px solid #d6d6d6;background:#fff"></div>
<svg class="a" style="left:40px;top:281px;" width="11" height="7" viewBox="0 0 11 7"><path d="M1,1.2L5.5,5.5L10,1.2" stroke="#888" stroke-width="1" fill="none"/></svg>
<div class="t" style="left:54.3px;top:277.18px;font-size:12.9px;color:#262e30;font-weight:normal;">Generic PLA</div>
<svg class="a" style="left:186px;top:276px;" width="16" height="16" viewBox="0 0 16 16"><path d="M12,2.5H4A1.8,1.8 0 0 0 2.2,4.3V12.2A1.8,1.8 0 0 0 4,14H11.8A1.8,1.8 0 0 0 13.6,12.2V6.5 M7.5,9L14.5,2" stroke="#666" stroke-width="1.2" fill="none"/></svg>
<div class="a" style="left:218px;top:274px;width:20px;height:20px;background:#ffffff;border:1px solid #555;"></div>
<div class="t" style="left:218px;top:274px;width:20px;height:20px;line-height:20px;text-align:center;font-size:13px;color:#262e30">4</div>
<div class="a" style="left:243px;top:271px;width:148px;height:26px;border:1px solid #d6d6d6;background:#fff"></div>
<svg class="a" style="left:250px;top:281px;" width="11" height="7" viewBox="0 0 11 7"><path d="M1,1.2L5.5,5.5L10,1.2" stroke="#888" stroke-width="1" fill="none"/></svg>
<div class="t" style="left:264.3px;top:277.18px;font-size:12.9px;color:#262e30;font-weight:normal;">Generic PLA</div>
<svg class="a" style="left:396px;top:276px;" width="16" height="16" viewBox="0 0 16 16"><path d="M12,2.5H4A1.8,1.8 0 0 0 2.2,4.3V12.2A1.8,1.8 0 0 0 4,14H11.8A1.8,1.8 0 0 0 13.6,12.2V6.5 M7.5,9L14.5,2" stroke="#666" stroke-width="1.2" fill="none"/></svg>
<div class="a" style="left:0px;top:315px;width:420px;height:30px;background:linear-gradient(#f7f7f7,#eeeeee)"></div>
<svg class="a" style="left:10px;top:321px;" width="19" height="17" viewBox="0 0 19 17"><path d="M9.5,2L17.5,5.5L9.5,9L1.5,5.5Z" stroke="#666" stroke-width="1.1" fill="none"/><path d="M1.5,9L9.5,12.5L17.5,9" stroke="#00ae42" stroke-width="1.3" fill="none"/><path d="M1.5,12.5L9.5,16L17.5,12.5" stroke="#666" stroke-width="1.1" fill="none"/></svg>
<div class="t" style="left:38.2px;top:322.16px;font-size:14.6px;color:#262e30;font-weight:normal;">Process</div>
<div class="a" style="left:104px;top:319px;width:103px;height:21px;background:#d9d9d9;border-radius:11px"></div>
<div class="a" style="left:154px;top:320px;width:53px;height:20px;background:#00ae42;border-radius:10px"></div>
<div class="t" style="left:114.4px;top:324.51px;font-size:11.8px;color:#7a7a7a;font-weight:normal;">Global</div>
<div class="t" style="left:160.5px;top:324.42px;font-size:12px;color:#ffffff;font-weight:normal;">Objects</div>
<div class="t" style="left:266.1px;top:321.97px;font-size:15px;color:#262e30;font-weight:normal;">Advanced</div>
<div class="a" style="left:336px;top:322px;width:27px;height:16px;background:#00ae42;border-radius:8px"></div>
<div class="a" style="left:349px;top:323.5px;width:13px;height:13px;background:#fff;border-radius:7px"></div>
<svg class="a" style="left:376px;top:322px;" width="19" height="17" viewBox="0 0 19 17"><rect x="1" y="1" width="16" height="15" rx="2" stroke="#333" stroke-width="1.1" fill="none"/><path d="M4,5H5M7,5H14M4,8.5H5M7,8.5H14M4,12H5M7,12H14" stroke="#333" stroke-width="1.1"/></svg>
<svg class="a" style="left:396px;top:322px;" width="16" height="17" viewBox="0 0 16 17"><circle cx="4" cy="4" r="2.3" stroke="#00ae42" stroke-width="1" fill="none"/><circle cx="4" cy="13" r="2.3" stroke="#00ae42" stroke-width="1" fill="none"/><circle cx="12" cy="6" r="2" stroke="#00ae42" stroke-width="1" fill="none"/><path d="M6,5.5L14,13M6,11.5L11,7.5" stroke="#00ae42" stroke-width="1"/></svg>
<div class="a" style="left:1px;top:346px;width:418px;height:22px;border:1px solid #cfcfcf;background:#fff"></div>
<svg class="a" style="left:5px;top:350px;" width="16" height="16" viewBox="0 0 16 16"><circle cx="6.5" cy="6.5" r="4.8" stroke="#444" stroke-width="1.4" fill="none"/><path d="M10,10L14.5,14.5" stroke="#444" stroke-width="1.6"/></svg>
<div class="t" style="left:26.3px;top:350.71px;font-size:11.6px;color:#8a8a8a;font-weight:normal;">Search plate, object and part.</div>
<svg class="a" style="left:397px;top:348px;" width="17" height="17" viewBox="0 0 17 17"><circle cx="8.5" cy="8.5" r="7.5" fill="#8d8d8d"/><path d="M5.5,5.5L11.5,11.5M11.5,5.5L5.5,11.5" stroke="#fff" stroke-width="1.5"/></svg>
<div class="a" style="left:0px;top:368px;width:420px;height:395px;border:1.5px solid #6b6b6b;border-top:1px solid #bdbdbd;background:#fff"></div>
<div class="a" style="left:291px;top:369px;width:1px;height:24px;background:#e3e3e3"></div>
<div class="a" style="left:321px;top:369px;width:1px;height:24px;background:#e3e3e3"></div>
<div class="a" style="left:371px;top:369px;width:1px;height:24px;background:#e3e3e3"></div>
<div class="t" style="left:7.4px;top:374.48px;font-size:12.9px;color:#262e30;font-weight:normal;">Name</div>
<div class="t" style="left:335.2px;top:374.96px;font-size:11.9px;color:#262e30;font-weight:normal;">Fila.</div>
<div class="a" style="left:1px;top:393px;width:418px;height:22px;background:#a3a3a3"></div>
<svg class="a" style="left:4px;top:398px;" width="11" height="11" viewBox="0 0 11 11"><path d="M1.5,3L5.5,7L9.5,3" stroke="#262e30" stroke-width="1.4" fill="none"/></svg>
<div class="t" style="left:20px;top:397.09px;font-size:13.1px;color:#262e30;font-weight:normal;">Plate 1</div>
<div class="t" style="left:28.2px;top:419.38px;font-size:12.7px;color:#262e30;font-weight:normal;">Kiosk_Customer_End_P...int_kiosk_holder.stl</div>
<div class="t" style="left:28.2px;top:441.77px;font-size:12.3px;color:#262e30;font-weight:normal;">Kiosk_Customer_End_...._point_case_main.stl</div>
<div class="a" style="left:300px;top:418.5px;width:14px;height:14px;background:#00ae42;border-radius:1px"></div>
<svg class="a" style="left:300px;top:418.5px;" width="14" height="14" viewBox="0 0 14 14"><path d="M3,7L6,10L11,4.5" stroke="#fff" stroke-width="1.3" fill="none"/></svg>
<div class="a" style="left:300px;top:440.5px;width:14px;height:14px;background:#00ae42;border-radius:1px"></div>
<svg class="a" style="left:300px;top:440.5px;" width="14" height="14" viewBox="0 0 14 14"><path d="M3,7L6,10L11,4.5" stroke="#fff" stroke-width="1.3" fill="none"/></svg>
<div class="a" style="left:325px;top:416px;width:44px;height:20px;background:#e8648f"></div>
<div class="a" style="left:325px;top:438px;width:44px;height:20px;background:#e8648f"></div>
<div class="t" style="left:325px;top:416px;width:44px;line-height:20px;text-align:center;font-size:13px;color:#262e30">2</div>
<div class="t" style="left:325px;top:438px;width:44px;line-height:20px;text-align:center;font-size:13px;color:#262e30">2</div>
<svg class="a" style="left:388px;top:417px;" width="13" height="15" viewBox="0 0 13 15"><path d="M3.5,6V4A3,3 0 0 1 9.5,4" stroke="#f07d1a" stroke-width="1.6" fill="none"/><rect x="2" y="6.5" width="9.5" height="7.5" rx="1" fill="#f07d1a"/></svg>
<svg class="a" style="left:5px;top:463px;" width="9" height="12" viewBox="0 0 9 12"><path d="M2,2L6,6L2,10" stroke="#555" stroke-width="1.2" fill="none"/></svg>
<div class="t" style="left:20px;top:462.90px;font-size:13.7px;color:#262e30;font-weight:normal;">Outside</div>
<div class="t" style="left:14.6px;top:768.21px;font-size:14.7px;color:#262e30;font-weight:bold;">Plate Settings</div>
<div class="a" style="left:11px;top:786.5px;width:104px;height:2px;background:#00ae42;border-radius:1px"></div>
<div class="a" style="left:0px;top:788px;width:420px;height:1px;background:#d0d0d0"></div>
<div class="t" style="left:25.2px;top:807.23px;font-size:15.5px;color:#262e30;font-weight:normal;">Plate type</div>
<div class="a" style="left:245px;top:802px;width:120px;height:26px;border:1px solid #d6d6d6;background:#fff"></div>
<svg class="a" style="left:251px;top:812px;" width="11" height="7" viewBox="0 0 11 7"><path d="M1,1.2L5.5,5.5L10,1.2" stroke="#888" stroke-width="1" fill="none"/></svg>
<div class="t" style="left:266.1px;top:807.67px;font-size:14.8px;color:#262e30;font-weight:normal;">Textured PEI...</div>
<div class="t" style="left:25.2px;top:837.58px;font-size:15.4px;color:#262e30;font-weight:normal;">Print sequence</div>
<div class="a" style="left:245px;top:832px;width:120px;height:26px;border:1px solid #d6d6d6;background:#fff"></div>
<svg class="a" style="left:251px;top:842px;" width="11" height="7" viewBox="0 0 11 7"><path d="M1,1.2L5.5,5.5L10,1.2" stroke="#888" stroke-width="1" fill="none"/></svg>
<div class="t" style="left:266.1px;top:837.43px;font-size:15.3px;color:#262e30;font-weight:normal;">By layer</div>
<div class="t" style="left:25.2px;top:867.52px;font-size:15.1px;color:#262e30;font-weight:normal;">Spiral vase</div>
<div class="a" style="left:246px;top:867.5px;width:16px;height:16px;border:1px solid #9a9a9a;border-radius:2px;background:#fff"></div>
<div class="t" style="left:25.2px;top:897.43px;font-size:15.5px;color:#262e30;font-weight:normal;">First layer filament sequence</div>
<div class="a" style="left:245px;top:892px;width:120px;height:26px;border:1px solid #d6d6d6;background:#fff"></div>
<svg class="a" style="left:251px;top:902px;" width="11" height="7" viewBox="0 0 11 7"><path d="M1,1.2L5.5,5.5L10,1.2" stroke="#888" stroke-width="1" fill="none"/></svg>
<div class="t" style="left:266.1px;top:897.33px;font-size:15.5px;color:#262e30;font-weight:normal;">Auto</div>
<div class="t" style="left:25.2px;top:927.33px;font-size:15.5px;color:#262e30;font-weight:normal;">Other layers filament</div>
<div class="t" style="left:25.2px;top:945.67px;font-size:15px;color:#262e30;font-weight:normal;">sequence</div>
<div class="a" style="left:245px;top:931px;width:120px;height:26px;border:1px solid #d6d6d6;background:#fff"></div>
<svg class="a" style="left:251px;top:941px;" width="11" height="7" viewBox="0 0 11 7"><path d="M1,1.2L5.5,5.5L10,1.2" stroke="#888" stroke-width="1" fill="none"/></svg>
<div class="t" style="left:266.1px;top:936.33px;font-size:15.5px;color:#262e30;font-weight:normal;">Auto</div>
</body></html>
